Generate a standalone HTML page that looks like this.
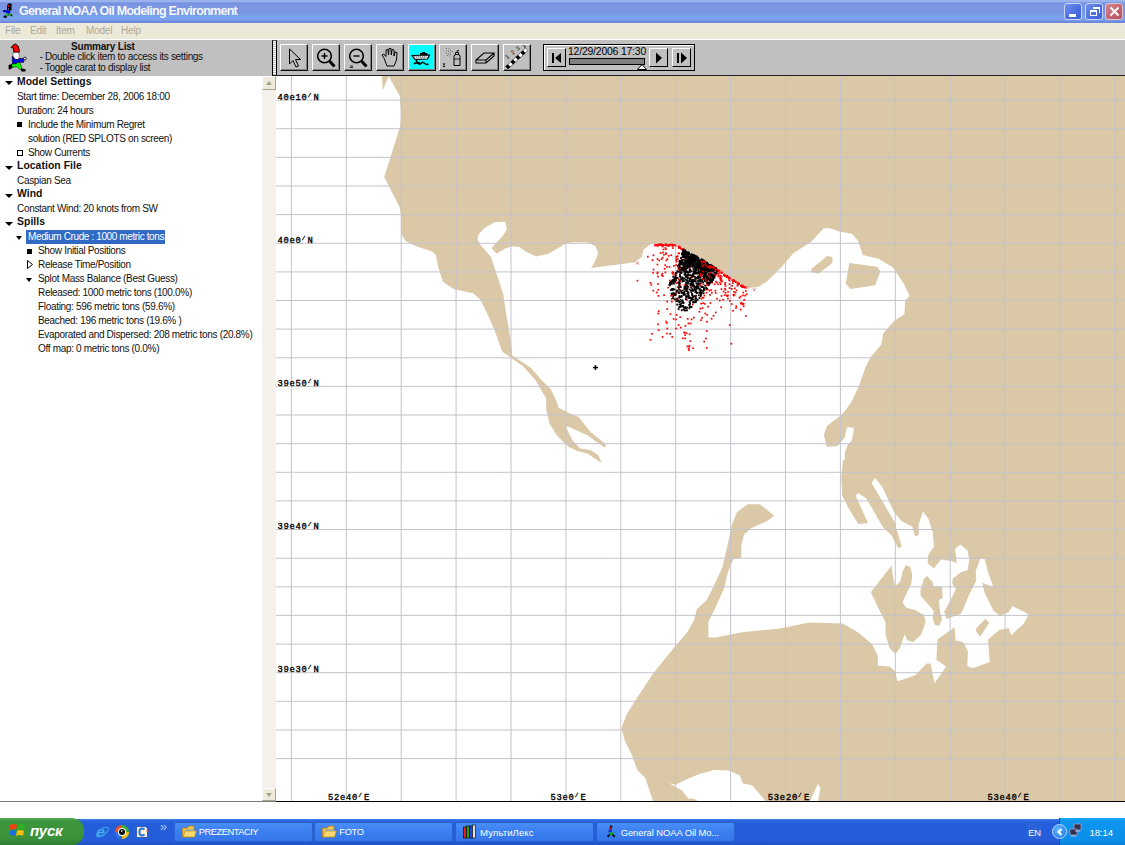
<!DOCTYPE html>
<html><head><meta charset="utf-8">
<style>
*{margin:0;padding:0;box-sizing:border-box}
html,body{width:1125px;height:845px;overflow:hidden;background:#fff;font-family:"Liberation Sans",sans-serif}
.abs{position:absolute}
#title{left:0;top:0;width:1125px;height:23px;background:linear-gradient(to bottom,#9ab2ee 0,#9ab2ee 1.5px,#7392de 3px,#7b95e2 5px,#7996e2 13px,#79a6ec 17px,#7ea0ea 20px,#6a86da 22px,#6f8ade 23px)}
#title .t{left:19px;top:4px;color:#f4f7ff;font-weight:bold;font-size:12.5px;letter-spacing:-0.72px;white-space:nowrap}
.tb{top:3px;width:18px;height:17px;border-radius:3px;border:1px solid #c8d4f4;background:linear-gradient(135deg,#6f90f0,#4a6de0 60%,#3f62d8)}
#menu{left:0;top:23px;width:1125px;height:17px;background:#ece9d8;border-bottom:1px solid #fff}
#menu span{position:absolute;top:2px;font-size:10px;color:#aca899;letter-spacing:-0.2px}
#hdr{left:0;top:40px;width:1125px;height:36px;background:#c0c0c0}
.list{font-size:10px;letter-spacing:-0.32px;color:#111;white-space:nowrap}
.li{position:absolute;white-space:nowrap}
.b{font-weight:bold;letter-spacing:0.05px}
.btn{position:absolute;top:44px;width:28px;height:27px;background:#c0c0c0;border-top:1px solid #fff;border-left:1px solid #fff;border-right:1.5px solid #111;border-bottom:1.5px solid #111;box-shadow:inset -1px -1px 0 #808080}
#task{left:0;top:818px;width:1125px;height:27px;background:linear-gradient(to bottom,#fff 0,#fff 1px,#3d80f0 1px,#2a64dc 3px,#245edb 5px,#245ddb 22px,#1f51c4 27px)}
.tbtn{position:absolute;top:822px;height:20px;border-radius:3px;background:linear-gradient(to bottom,#4a8ef7,#3a7ff0 50%,#3675ea);box-shadow:inset 0 0 0 1px #2a60d0;color:#fff;font-size:10.3px;white-space:nowrap}
.tbtn span{position:absolute;top:4px}
</style></head><body>
<svg width="1125" height="845" viewBox="0 0 1125 845" style="position:absolute;left:0;top:0">
<rect x="276" y="76" width="849" height="725" fill="#dbc8a7"/>
<polygon points="276.0,76.0 382.0,76.0 382.7,90.4 388.7,76.2 399.8,96.2 401.0,115.0 400.0,127.0 384.2,177.1 399.3,206.4 401.1,214.2 401.1,233.8 405.6,240.9 416.2,246.2 432.2,251.6 435.8,255.1 438.4,267.6 442.9,281.8 453.6,288.9 473.1,293.3 480.2,299.6 487.3,313.8 494.4,329.8 501.6,350.0 503.1,352.3 510.8,357.7 523.1,366.2 535.4,380.0 546.2,398.5 546.2,409.2 549.2,423.1 556.9,435.4 567.7,446.2 576.9,450.8 587.7,453.8 601.5,463.1 598.5,455.4 590.8,450.0 580.0,448.5 572.3,440.0 566.2,427.7 567.7,426.2 587.7,435.4 604.6,447.7 606.2,444.6 590.8,432.3 578.5,416.9 572.3,414.6 558.5,407.7 556.9,402.3 550.8,389.2 541.5,380.0 530.8,367.7 512.3,355.4 510.4,338.7 505.1,306.7 503.3,294.2 494.4,267.6 490.9,256.9 480.2,244.4 477.6,240.0 478.4,234.7 483.8,228.4 494.4,222.2 505.1,221.7 506.9,229.3 502.4,236.4 492.7,246.6 491.8,248.4 496.6,253.7 505.1,248.4 512.2,246.2 519.3,247.1 526.4,251.9 536.2,256.5 547.8,253.9 556.7,248.9 565.6,243.6 572.4,242.3 586.7,242.3 595.6,246.2 598.2,253.3 594.7,262.2 591.1,268.1 606.2,266.1 622.2,264.0 634.7,262.2 641.8,256.9 643.6,249.8 650.7,244.1 659.6,243.6 675.6,244.1 684.4,248.9 702.2,258.7 716.4,267.6 728.9,276.4 743.1,285.3 748.9,288.0 757.8,287.1 766.7,281.8 780.9,267.6 793.3,253.3 811.1,241.8 823.6,228.4 828.9,228.1 839.6,231.6 852.0,233.8 858.2,240.9 862.7,255.1 878.7,258.7 892.9,267.6 903.6,283.6 909.8,296.0 905.3,300.0 904.4,314.2 893.8,321.3 883.1,333.8 881.3,344.4 870.7,356.9 865.3,367.6 859.6,384.2 852.4,400.2 845.8,410.0 839.9,415.9 826.8,426.0 823.9,434.9 826.8,446.7 837.5,446.1 841.0,442.0 844.6,437.8 847.0,427.2 854.1,427.8 851.7,440.8 848.1,444.3 845.2,451.4 844.6,460.0 843.1,460.0 841.3,477.8 842.2,495.6 848.4,508.0 858.2,524.0 868.0,523.1 855.6,495.6 858.2,492.9 866.2,498.2 883.1,527.6 891.1,534.7 898.2,548.0 901.8,547.1 894.7,522.2 871.6,483.1 875.1,477.8 882.2,486.7 894.7,513.3 901.8,521.3 912.4,526.7 915.1,536.4 918.7,534.7 918.7,524.0 923.1,511.6 928.4,518.7 932.9,532.9 933.8,547.1 928.4,554.2 927.6,563.1 933.8,568.4 940.9,559.6 951.6,561.3 956.9,563.1 955.1,548.9 960.4,544.4 967.6,550.7 969.3,559.6 967.6,570.2 961.3,572.0 952.8,578.4 952.3,583.7 956.0,589.1 949.6,601.9 944.3,611.5 946.4,618.9 961.3,613.6 968.8,595.5 976.3,580.5 975.7,570.9 980.5,558.1 984.8,559.2 988.0,572.0 993.3,586.9 982.1,582.7 984.8,593.3 993.3,610.4 999.7,615.7 1008.3,612.5 1012.5,606.1 1016.8,608.3 1025.3,612.5 1028.5,614.7 1023.9,623.5 1011.1,635.2 1008.9,628.3 999.3,629.9 988.1,639.5 989.7,661.9 972.7,668.3 967.3,666.1 967.9,651.2 963.1,642.1 955.6,640.5 954.5,627.2 937.5,639.5 936.4,659.7 946.2,666.6 934.5,683.2 930.6,663.6 926.7,663.6 914.9,675.4 897.3,681.2 895.4,671.5 889.5,666.6 877.8,665.6 877.8,655.8 871.9,644.1 858.2,632.4 842.6,623.6 809.3,622.6 780.0,628.4 742.2,632.2 715.6,637.6 708.4,637.6 708.4,621.6 715.6,607.3 724.4,587.8 728.0,571.8 733.3,559.3 741.3,557.6 741.3,545.1 744.0,534.4 751.1,528.2 767.1,521.1 774.2,515.8 760.0,504.2 747.6,504.2 736.9,512.2 731.6,525.6 728.0,543.3 722.7,566.4 713.8,586.0 706.7,600.2 696.9,609.1 694.2,619.8 687.1,632.4 674.7,646.7 653.3,673.3 635.6,700.0 626.7,714.2 621.3,728.4 624.9,740.9 632.0,755.1 637.3,770.0 645.3,778.0 653.0,801.0 276.0,801.0" fill="#fff"/>
<polygon points="669.2,783.2 675.6,784.8 686.8,779.2 698.0,774.4 714.0,769.9 728.4,770.4 739.6,775.2 742.8,783.2 752.4,785.6 762.0,796.8 765.2,801.0 698.0,801.0 693.2,798.4 688.4,798.4 682.0,790.4" fill="#fff"/>
<polygon points="810.0,801.0 818.0,784.0 820.4,788.0 818.0,801.0" fill="#fff"/>
<polygon points="811.1,269.3 827.1,256.0 832.4,256.9 832.4,263.1 818.2,273.8 811.1,272.0" fill="#dbc8a7"/>
<polygon points="849.3,263.1 876.9,266.7 880.4,271.1 875.1,285.3 850.2,288.9 845.8,283.6" fill="#dbc8a7"/>
<polygon points="891.5,565.5 893.1,576.7 895.2,586.3 900.5,580.9 902.7,571.3 905.9,564.9 910.1,567.1 912.3,574.5 911.2,584.1 905.9,594.8 902.7,602.3 905.9,607.6 915.5,610.3 924.0,615.1 925.7,622.0 920.8,635.3 913.0,642.1 907.1,640.2 905.1,634.3 903.2,638.2 900.0,648.0 895.4,653.9 889.5,648.0 885.6,634.3 885.6,622.6 877.8,606.9 870.9,592.3" fill="#dbc8a7"/>
<polygon points="927.2,576.1 932.5,582.0 933.6,586.3 942.1,587.3 942.7,598.0 938.9,600.1 940.0,611.9 942.1,619.3 938.9,625.7 934.7,624.7 932.5,618.3 933.6,610.8 928.3,604.4 920.8,595.9 920.3,590.5 924.0,578.8" fill="#dbc8a7"/>
<polygon points="975.9,628.8 985.5,618.7 989.2,622.9 980.1,636.8 976.4,632.0" fill="#dbc8a7"/>
<g fill="#c4c4cc"><rect x="290.9" y="76" width="1" height="725"/><rect x="345.8" y="76" width="1" height="725"/><rect x="400.7" y="76" width="1" height="725"/><rect x="455.6" y="76" width="1" height="725"/><rect x="510.5" y="76" width="1" height="725"/><rect x="565.4" y="76" width="1" height="725"/><rect x="620.3" y="76" width="1" height="725"/><rect x="675.2" y="76" width="1" height="725"/><rect x="730.1" y="76" width="1" height="725"/><rect x="785.0" y="76" width="1" height="725"/><rect x="839.9" y="76" width="1" height="725"/><rect x="894.8" y="76" width="1" height="725"/><rect x="949.7" y="76" width="1" height="725"/><rect x="1004.6" y="76" width="1" height="725"/><rect x="1059.5" y="76" width="1" height="725"/><rect x="1114.4" y="76" width="1" height="725"/><rect x="276" y="99.6" width="849" height="1"/><rect x="276" y="128.2" width="849" height="1"/><rect x="276" y="156.9" width="849" height="1"/><rect x="276" y="185.5" width="849" height="1"/><rect x="276" y="214.1" width="849" height="1"/><rect x="276" y="242.8" width="849" height="1"/><rect x="276" y="271.4" width="849" height="1"/><rect x="276" y="300.0" width="849" height="1"/><rect x="276" y="328.6" width="849" height="1"/><rect x="276" y="357.3" width="849" height="1"/><rect x="276" y="385.9" width="849" height="1"/><rect x="276" y="414.5" width="849" height="1"/><rect x="276" y="443.2" width="849" height="1"/><rect x="276" y="471.8" width="849" height="1"/><rect x="276" y="500.4" width="849" height="1"/><rect x="276" y="529.0" width="849" height="1"/><rect x="276" y="557.7" width="849" height="1"/><rect x="276" y="586.3" width="849" height="1"/><rect x="276" y="614.9" width="849" height="1"/><rect x="276" y="643.6" width="849" height="1"/><rect x="276" y="672.2" width="849" height="1"/><rect x="276" y="700.8" width="849" height="1"/><rect x="276" y="729.5" width="849" height="1"/><rect x="276" y="758.1" width="849" height="1"/></g>
<g fill="#f00"><rect x="713.2" y="267.1" width="1.7" height="1.7"/><rect x="662.1" y="244.6" width="1.7" height="1.7"/><rect x="674.8" y="244.8" width="1.7" height="1.7"/><rect x="666.9" y="244.5" width="1.7" height="1.7"/><rect x="713.3" y="266.5" width="1.7" height="1.7"/><rect x="718.8" y="269.9" width="1.7" height="1.7"/><rect x="666.3" y="244.8" width="1.7" height="1.7"/><rect x="740.6" y="284.8" width="1.7" height="1.7"/><rect x="723.1" y="274.0" width="1.7" height="1.7"/><rect x="737.2" y="282.7" width="1.7" height="1.7"/><rect x="727.6" y="276.8" width="1.7" height="1.7"/><rect x="654.7" y="244.0" width="1.7" height="1.7"/><rect x="741.4" y="285.9" width="1.7" height="1.7"/><rect x="737.6" y="283.1" width="1.7" height="1.7"/><rect x="659.9" y="244.3" width="1.7" height="1.7"/><rect x="667.9" y="244.6" width="1.7" height="1.7"/><rect x="683.1" y="248.8" width="1.7" height="1.7"/><rect x="656.1" y="243.9" width="1.7" height="1.7"/><rect x="724.5" y="274.9" width="1.7" height="1.7"/><rect x="726.0" y="275.9" width="1.7" height="1.7"/><rect x="677.9" y="245.8" width="1.7" height="1.7"/><rect x="713.6" y="266.4" width="1.7" height="1.7"/><rect x="659.7" y="243.9" width="1.7" height="1.7"/><rect x="743.4" y="286.5" width="1.7" height="1.7"/><rect x="716.9" y="269.2" width="1.7" height="1.7"/><rect x="660.1" y="243.6" width="1.7" height="1.7"/><rect x="671.9" y="244.8" width="1.7" height="1.7"/><rect x="741.7" y="284.7" width="1.7" height="1.7"/><rect x="661.0" y="243.6" width="1.7" height="1.7"/><rect x="736.8" y="282.2" width="1.7" height="1.7"/><rect x="732.1" y="280.2" width="1.7" height="1.7"/><rect x="718.7" y="269.9" width="1.7" height="1.7"/><rect x="744.5" y="286.5" width="1.7" height="1.7"/><rect x="733.1" y="279.4" width="1.7" height="1.7"/><rect x="715.0" y="267.8" width="1.7" height="1.7"/><rect x="664.8" y="243.6" width="1.7" height="1.7"/><rect x="683.7" y="249.1" width="1.7" height="1.7"/><rect x="664.6" y="243.8" width="1.7" height="1.7"/><rect x="715.6" y="268.5" width="1.7" height="1.7"/><rect x="721.2" y="271.4" width="1.7" height="1.7"/><rect x="723.1" y="274.0" width="1.7" height="1.7"/><rect x="733.0" y="279.8" width="1.7" height="1.7"/><rect x="668.7" y="244.5" width="1.7" height="1.7"/><rect x="733.8" y="280.2" width="1.7" height="1.7"/><rect x="735.1" y="280.9" width="1.7" height="1.7"/><rect x="726.0" y="275.8" width="1.7" height="1.7"/><rect x="728.7" y="277.2" width="1.7" height="1.7"/><rect x="671.4" y="243.7" width="1.7" height="1.7"/><rect x="721.3" y="272.0" width="1.7" height="1.7"/><rect x="672.0" y="244.4" width="1.7" height="1.7"/><rect x="665.5" y="243.6" width="1.7" height="1.7"/><rect x="669.4" y="243.8" width="1.7" height="1.7"/><rect x="727.9" y="277.4" width="1.7" height="1.7"/><rect x="683.8" y="249.6" width="1.7" height="1.7"/><rect x="743.5" y="286.1" width="1.7" height="1.7"/><rect x="680.5" y="248.4" width="1.7" height="1.7"/><rect x="671.6" y="245.3" width="1.7" height="1.7"/><rect x="677.7" y="245.7" width="1.7" height="1.7"/><rect x="723.1" y="274.2" width="1.7" height="1.7"/><rect x="662.2" y="244.1" width="1.7" height="1.7"/><rect x="713.4" y="267.3" width="1.7" height="1.7"/><rect x="714.5" y="267.9" width="1.7" height="1.7"/><rect x="725.6" y="275.9" width="1.7" height="1.7"/><rect x="723.2" y="274.1" width="1.7" height="1.7"/><rect x="742.4" y="285.6" width="1.7" height="1.7"/><rect x="657.2" y="245.0" width="1.7" height="1.7"/><rect x="728.2" y="276.3" width="1.7" height="1.7"/><rect x="682.1" y="248.1" width="1.7" height="1.7"/><rect x="739.9" y="285.0" width="1.7" height="1.7"/><rect x="742.1" y="286.1" width="1.7" height="1.7"/><rect x="679.8" y="247.5" width="1.7" height="1.7"/><rect x="661.3" y="244.6" width="1.7" height="1.7"/><rect x="678.3" y="246.0" width="1.7" height="1.7"/><rect x="717.1" y="268.9" width="1.7" height="1.7"/><rect x="657.7" y="243.7" width="1.7" height="1.7"/><rect x="659.8" y="244.2" width="1.7" height="1.7"/><rect x="673.9" y="244.1" width="1.7" height="1.7"/><rect x="734.9" y="281.5" width="1.7" height="1.7"/><rect x="661.5" y="245.0" width="1.7" height="1.7"/><rect x="712.4" y="266.5" width="1.7" height="1.7"/><rect x="658.6" y="243.8" width="1.7" height="1.7"/><rect x="670.4" y="243.7" width="1.7" height="1.7"/><rect x="717.9" y="270.2" width="1.7" height="1.7"/><rect x="743.1" y="286.0" width="1.7" height="1.7"/><rect x="731.4" y="279.3" width="1.7" height="1.7"/><rect x="742.7" y="286.4" width="1.7" height="1.7"/><rect x="726.4" y="275.3" width="1.7" height="1.7"/><rect x="713.4" y="267.3" width="1.7" height="1.7"/><rect x="732.6" y="280.3" width="1.7" height="1.7"/><rect x="663.0" y="244.2" width="1.7" height="1.7"/><rect x="679.2" y="246.6" width="1.7" height="1.7"/><rect x="726.3" y="275.0" width="1.7" height="1.7"/><rect x="659.5" y="243.4" width="1.7" height="1.7"/><rect x="655.7" y="244.7" width="1.7" height="1.7"/><rect x="720.5" y="271.9" width="1.7" height="1.7"/><rect x="678.8" y="246.4" width="1.7" height="1.7"/><rect x="737.8" y="282.7" width="1.7" height="1.7"/><rect x="671.8" y="244.1" width="1.7" height="1.7"/><rect x="664.6" y="244.2" width="1.7" height="1.7"/><rect x="668.6" y="244.0" width="1.7" height="1.7"/><rect x="738.2" y="283.1" width="1.7" height="1.7"/><rect x="743.3" y="285.8" width="1.7" height="1.7"/><rect x="732.0" y="279.2" width="1.7" height="1.7"/><rect x="668.4" y="244.8" width="1.7" height="1.7"/><rect x="725.7" y="274.8" width="1.7" height="1.7"/><rect x="678.6" y="246.2" width="1.7" height="1.7"/><rect x="667.4" y="244.6" width="1.7" height="1.7"/><rect x="740.3" y="284.5" width="1.7" height="1.7"/><rect x="662.2" y="244.1" width="1.7" height="1.7"/><rect x="737.9" y="282.8" width="1.7" height="1.7"/><rect x="684.3" y="307.2" width="1.7" height="1.7"/><rect x="683.7" y="264.7" width="1.7" height="1.7"/><rect x="657.4" y="288.9" width="1.7" height="1.7"/><rect x="636.6" y="279.8" width="1.7" height="1.7"/><rect x="687.8" y="295.0" width="1.7" height="1.7"/><rect x="675.4" y="259.2" width="1.7" height="1.7"/><rect x="686.9" y="318.0" width="1.7" height="1.7"/><rect x="686.3" y="309.6" width="1.7" height="1.7"/><rect x="669.2" y="333.0" width="1.7" height="1.7"/><rect x="679.3" y="284.6" width="1.7" height="1.7"/><rect x="672.3" y="271.9" width="1.7" height="1.7"/><rect x="649.5" y="282.0" width="1.7" height="1.7"/><rect x="647.0" y="255.8" width="1.7" height="1.7"/><rect x="687.4" y="257.3" width="1.7" height="1.7"/><rect x="666.1" y="266.1" width="1.7" height="1.7"/><rect x="657.8" y="310.4" width="1.7" height="1.7"/><rect x="665.2" y="248.3" width="1.7" height="1.7"/><rect x="652.6" y="254.4" width="1.7" height="1.7"/><rect x="708.0" y="277.6" width="1.7" height="1.7"/><rect x="672.4" y="288.6" width="1.7" height="1.7"/><rect x="657.4" y="312.7" width="1.7" height="1.7"/><rect x="657.1" y="275.7" width="1.7" height="1.7"/><rect x="691.7" y="257.8" width="1.7" height="1.7"/><rect x="665.1" y="253.2" width="1.7" height="1.7"/><rect x="707.2" y="305.8" width="1.7" height="1.7"/><rect x="688.8" y="333.4" width="1.7" height="1.7"/><rect x="692.3" y="261.9" width="1.7" height="1.7"/><rect x="702.5" y="283.2" width="1.7" height="1.7"/><rect x="683.8" y="249.6" width="1.7" height="1.7"/><rect x="674.5" y="273.3" width="1.7" height="1.7"/><rect x="687.6" y="322.6" width="1.7" height="1.7"/><rect x="672.0" y="271.3" width="1.7" height="1.7"/><rect x="710.2" y="267.5" width="1.7" height="1.7"/><rect x="689.7" y="322.6" width="1.7" height="1.7"/><rect x="675.8" y="260.8" width="1.7" height="1.7"/><rect x="666.4" y="308.3" width="1.7" height="1.7"/><rect x="666.0" y="322.2" width="1.7" height="1.7"/><rect x="657.2" y="283.2" width="1.7" height="1.7"/><rect x="657.2" y="323.5" width="1.7" height="1.7"/><rect x="658.3" y="259.6" width="1.7" height="1.7"/><rect x="661.7" y="336.1" width="1.7" height="1.7"/><rect x="675.2" y="327.7" width="1.7" height="1.7"/><rect x="675.5" y="264.1" width="1.7" height="1.7"/><rect x="704.0" y="303.0" width="1.7" height="1.7"/><rect x="660.9" y="274.5" width="1.7" height="1.7"/><rect x="649.6" y="338.9" width="1.7" height="1.7"/><rect x="684.3" y="334.2" width="1.7" height="1.7"/><rect x="699.4" y="284.1" width="1.7" height="1.7"/><rect x="685.7" y="332.4" width="1.7" height="1.7"/><rect x="675.2" y="300.4" width="1.7" height="1.7"/><rect x="671.4" y="336.1" width="1.7" height="1.7"/><rect x="692.4" y="273.8" width="1.7" height="1.7"/><rect x="672.8" y="318.0" width="1.7" height="1.7"/><rect x="686.6" y="345.5" width="1.7" height="1.7"/><rect x="684.5" y="325.1" width="1.7" height="1.7"/><rect x="656.5" y="272.6" width="1.7" height="1.7"/><rect x="675.8" y="258.4" width="1.7" height="1.7"/><rect x="692.0" y="303.6" width="1.7" height="1.7"/><rect x="668.7" y="266.1" width="1.7" height="1.7"/><rect x="657.8" y="329.3" width="1.7" height="1.7"/><rect x="651.7" y="259.4" width="1.7" height="1.7"/><rect x="677.7" y="324.1" width="1.7" height="1.7"/><rect x="666.6" y="258.2" width="1.7" height="1.7"/><rect x="671.5" y="288.0" width="1.7" height="1.7"/><rect x="680.4" y="257.5" width="1.7" height="1.7"/><rect x="675.4" y="292.4" width="1.7" height="1.7"/><rect x="690.8" y="318.6" width="1.7" height="1.7"/><rect x="667.9" y="255.0" width="1.7" height="1.7"/><rect x="652.2" y="271.9" width="1.7" height="1.7"/><rect x="684.1" y="331.8" width="1.7" height="1.7"/><rect x="692.2" y="347.4" width="1.7" height="1.7"/><rect x="676.9" y="286.3" width="1.7" height="1.7"/><rect x="675.7" y="314.0" width="1.7" height="1.7"/><rect x="676.5" y="297.6" width="1.7" height="1.7"/><rect x="669.0" y="279.7" width="1.7" height="1.7"/><rect x="679.4" y="316.3" width="1.7" height="1.7"/><rect x="688.3" y="345.9" width="1.7" height="1.7"/><rect x="666.1" y="332.7" width="1.7" height="1.7"/><rect x="687.7" y="347.8" width="1.7" height="1.7"/><rect x="672.2" y="247.2" width="1.7" height="1.7"/><rect x="705.9" y="330.2" width="1.7" height="1.7"/><rect x="679.1" y="271.9" width="1.7" height="1.7"/><rect x="651.2" y="333.0" width="1.7" height="1.7"/><rect x="690.6" y="261.9" width="1.7" height="1.7"/><rect x="679.7" y="268.7" width="1.7" height="1.7"/><rect x="689.5" y="340.3" width="1.7" height="1.7"/><rect x="670.9" y="298.0" width="1.7" height="1.7"/><rect x="670.3" y="294.9" width="1.7" height="1.7"/><rect x="688.1" y="349.4" width="1.7" height="1.7"/><rect x="686.1" y="299.0" width="1.7" height="1.7"/><rect x="706.0" y="320.9" width="1.7" height="1.7"/><rect x="675.2" y="282.0" width="1.7" height="1.7"/><rect x="685.0" y="288.9" width="1.7" height="1.7"/><rect x="678.1" y="278.4" width="1.7" height="1.7"/><rect x="700.3" y="302.8" width="1.7" height="1.7"/><rect x="687.8" y="295.9" width="1.7" height="1.7"/><rect x="705.1" y="337.7" width="1.7" height="1.7"/><rect x="678.6" y="280.5" width="1.7" height="1.7"/><rect x="703.3" y="340.8" width="1.7" height="1.7"/><rect x="702.7" y="296.8" width="1.7" height="1.7"/><rect x="688.6" y="344.9" width="1.7" height="1.7"/><rect x="705.9" y="347.0" width="1.7" height="1.7"/><rect x="677.7" y="268.4" width="1.7" height="1.7"/><rect x="691.5" y="281.1" width="1.7" height="1.7"/><rect x="678.0" y="287.0" width="1.7" height="1.7"/><rect x="671.8" y="293.5" width="1.7" height="1.7"/><rect x="666.3" y="300.8" width="1.7" height="1.7"/><rect x="672.5" y="273.6" width="1.7" height="1.7"/><rect x="702.3" y="273.2" width="1.7" height="1.7"/><rect x="681.5" y="248.8" width="1.7" height="1.7"/><rect x="666.4" y="327.7" width="1.7" height="1.7"/><rect x="690.9" y="262.8" width="1.7" height="1.7"/><rect x="684.7" y="253.5" width="1.7" height="1.7"/><rect x="665.2" y="320.7" width="1.7" height="1.7"/><rect x="712.7" y="315.0" width="1.7" height="1.7"/><rect x="669.3" y="283.9" width="1.7" height="1.7"/><rect x="689.8" y="286.4" width="1.7" height="1.7"/><rect x="705.6" y="291.9" width="1.7" height="1.7"/><rect x="701.2" y="317.0" width="1.7" height="1.7"/><rect x="686.7" y="274.5" width="1.7" height="1.7"/><rect x="669.6" y="313.2" width="1.7" height="1.7"/><rect x="657.6" y="295.0" width="1.7" height="1.7"/><rect x="705.8" y="288.6" width="1.7" height="1.7"/><rect x="678.7" y="264.7" width="1.7" height="1.7"/><rect x="684.4" y="337.6" width="1.7" height="1.7"/><rect x="682.1" y="337.4" width="1.7" height="1.7"/><rect x="667.2" y="286.8" width="1.7" height="1.7"/><rect x="681.8" y="255.3" width="1.7" height="1.7"/><rect x="703.4" y="271.9" width="1.7" height="1.7"/><rect x="718.9" y="299.6" width="1.7" height="1.7"/><rect x="671.9" y="294.9" width="1.7" height="1.7"/><rect x="720.7" y="275.7" width="1.7" height="1.7"/><rect x="679.4" y="289.2" width="1.7" height="1.7"/><rect x="675.4" y="256.0" width="1.7" height="1.7"/><rect x="691.8" y="264.3" width="1.7" height="1.7"/><rect x="693.1" y="295.3" width="1.7" height="1.7"/><rect x="683.8" y="268.3" width="1.7" height="1.7"/><rect x="700.5" y="269.6" width="1.7" height="1.7"/><rect x="694.6" y="296.6" width="1.7" height="1.7"/><rect x="685.0" y="251.0" width="1.7" height="1.7"/><rect x="710.7" y="317.9" width="1.7" height="1.7"/><rect x="701.2" y="268.4" width="1.7" height="1.7"/><rect x="697.1" y="262.2" width="1.7" height="1.7"/><rect x="688.7" y="274.6" width="1.7" height="1.7"/><rect x="706.4" y="270.9" width="1.7" height="1.7"/><rect x="675.0" y="277.0" width="1.7" height="1.7"/><rect x="702.2" y="302.3" width="1.7" height="1.7"/><rect x="678.6" y="263.1" width="1.7" height="1.7"/><rect x="661.4" y="272.9" width="1.7" height="1.7"/><rect x="679.9" y="326.8" width="1.7" height="1.7"/><rect x="706.2" y="314.0" width="1.7" height="1.7"/><rect x="715.1" y="280.9" width="1.7" height="1.7"/><rect x="663.2" y="294.3" width="1.7" height="1.7"/><rect x="678.3" y="252.6" width="1.7" height="1.7"/><rect x="685.3" y="261.9" width="1.7" height="1.7"/><rect x="705.6" y="278.2" width="1.7" height="1.7"/><rect x="690.9" y="259.8" width="1.7" height="1.7"/><rect x="664.5" y="271.5" width="1.7" height="1.7"/><rect x="683.4" y="267.3" width="1.7" height="1.7"/><rect x="678.8" y="284.0" width="1.7" height="1.7"/><rect x="700.1" y="319.3" width="1.7" height="1.7"/><rect x="685.2" y="288.6" width="1.7" height="1.7"/><rect x="695.0" y="271.9" width="1.7" height="1.7"/><rect x="675.0" y="298.5" width="1.7" height="1.7"/><rect x="688.5" y="266.5" width="1.7" height="1.7"/><rect x="684.7" y="286.4" width="1.7" height="1.7"/><rect x="673.4" y="278.5" width="1.7" height="1.7"/><rect x="687.0" y="265.0" width="1.7" height="1.7"/><rect x="650.5" y="283.9" width="1.7" height="1.7"/><rect x="659.7" y="252.2" width="1.7" height="1.7"/><rect x="682.6" y="267.5" width="1.7" height="1.7"/><rect x="679.3" y="266.9" width="1.7" height="1.7"/><rect x="694.4" y="259.0" width="1.7" height="1.7"/><rect x="700.6" y="297.8" width="1.7" height="1.7"/><rect x="707.2" y="282.2" width="1.7" height="1.7"/><rect x="691.6" y="261.3" width="1.7" height="1.7"/><rect x="677.5" y="267.0" width="1.7" height="1.7"/><rect x="698.6" y="310.9" width="1.7" height="1.7"/><rect x="676.7" y="255.4" width="1.7" height="1.7"/><rect x="656.6" y="263.7" width="1.7" height="1.7"/><rect x="653.9" y="244.6" width="1.7" height="1.7"/><rect x="700.2" y="261.2" width="1.7" height="1.7"/><rect x="673.1" y="265.0" width="1.7" height="1.7"/><rect x="652.7" y="268.7" width="1.7" height="1.7"/><rect x="665.0" y="252.3" width="1.7" height="1.7"/><rect x="678.0" y="246.5" width="1.7" height="1.7"/><rect x="698.1" y="263.4" width="1.7" height="1.7"/><rect x="705.8" y="284.6" width="1.7" height="1.7"/><rect x="670.4" y="254.3" width="1.7" height="1.7"/><rect x="691.4" y="276.4" width="1.7" height="1.7"/><rect x="662.0" y="275.1" width="1.7" height="1.7"/><rect x="661.9" y="245.7" width="1.7" height="1.7"/><rect x="692.9" y="316.8" width="1.7" height="1.7"/><rect x="683.7" y="284.2" width="1.7" height="1.7"/><rect x="675.3" y="274.4" width="1.7" height="1.7"/><rect x="730.6" y="342.9" width="1.7" height="1.7"/><rect x="660.8" y="258.3" width="1.7" height="1.7"/><rect x="676.5" y="255.7" width="1.7" height="1.7"/><rect x="656.8" y="271.6" width="1.7" height="1.7"/><rect x="683.2" y="331.6" width="1.7" height="1.7"/><rect x="724.6" y="289.0" width="1.7" height="1.7"/><rect x="690.0" y="276.6" width="1.7" height="1.7"/><rect x="661.7" y="256.8" width="1.7" height="1.7"/><rect x="682.3" y="253.8" width="1.7" height="1.7"/><rect x="678.1" y="247.2" width="1.7" height="1.7"/><rect x="713.4" y="274.9" width="1.7" height="1.7"/><rect x="670.5" y="282.0" width="1.7" height="1.7"/><rect x="683.4" y="270.7" width="1.7" height="1.7"/><rect x="710.4" y="289.2" width="1.7" height="1.7"/><rect x="662.6" y="248.6" width="1.7" height="1.7"/><rect x="691.3" y="265.4" width="1.7" height="1.7"/><rect x="693.7" y="261.2" width="1.7" height="1.7"/><rect x="676.9" y="258.3" width="1.7" height="1.7"/><rect x="677.7" y="252.4" width="1.7" height="1.7"/><rect x="671.4" y="272.2" width="1.7" height="1.7"/><rect x="662.1" y="251.6" width="1.7" height="1.7"/><rect x="664.5" y="247.1" width="1.7" height="1.7"/><rect x="678.9" y="285.3" width="1.7" height="1.7"/><rect x="688.9" y="268.0" width="1.7" height="1.7"/><rect x="696.7" y="257.1" width="1.7" height="1.7"/><rect x="693.8" y="254.8" width="1.7" height="1.7"/><rect x="699.6" y="289.9" width="1.7" height="1.7"/><rect x="684.7" y="252.9" width="1.7" height="1.7"/><rect x="684.8" y="268.4" width="1.7" height="1.7"/><rect x="695.5" y="285.5" width="1.7" height="1.7"/><rect x="678.3" y="269.5" width="1.7" height="1.7"/><rect x="678.7" y="281.7" width="1.7" height="1.7"/><rect x="679.3" y="280.4" width="1.7" height="1.7"/><rect x="699.4" y="307.8" width="1.7" height="1.7"/><rect x="676.3" y="272.1" width="1.7" height="1.7"/><rect x="664.4" y="264.3" width="1.7" height="1.7"/><rect x="675.2" y="318.6" width="1.7" height="1.7"/><rect x="655.9" y="291.6" width="1.7" height="1.7"/><rect x="684.9" y="268.5" width="1.7" height="1.7"/><rect x="652.4" y="289.8" width="1.7" height="1.7"/><rect x="697.4" y="269.0" width="1.7" height="1.7"/><rect x="696.7" y="272.9" width="1.7" height="1.7"/><rect x="686.2" y="290.5" width="1.7" height="1.7"/><rect x="681.6" y="266.8" width="1.7" height="1.7"/><rect x="680.9" y="252.5" width="1.7" height="1.7"/><rect x="688.8" y="263.8" width="1.7" height="1.7"/><rect x="684.3" y="257.6" width="1.7" height="1.7"/><rect x="709.5" y="302.2" width="1.7" height="1.7"/><rect x="671.0" y="300.7" width="1.7" height="1.7"/><rect x="689.0" y="265.3" width="1.7" height="1.7"/><rect x="656.6" y="258.2" width="1.7" height="1.7"/><rect x="711.2" y="281.9" width="1.7" height="1.7"/><rect x="686.4" y="275.5" width="1.7" height="1.7"/><rect x="663.8" y="268.0" width="1.7" height="1.7"/><rect x="665.5" y="259.5" width="1.7" height="1.7"/><rect x="697.4" y="264.5" width="1.7" height="1.7"/><rect x="695.8" y="291.8" width="1.7" height="1.7"/><rect x="663.1" y="253.9" width="1.7" height="1.7"/><rect x="692.5" y="257.0" width="1.7" height="1.7"/></g>
<g fill="#000"><rect x="690.8" y="262.4" width="1.8" height="1.8"/><rect x="672.0" y="288.3" width="1.8" height="1.8"/><rect x="702.7" y="259.4" width="1.8" height="1.8"/><rect x="684.7" y="256.7" width="1.8" height="1.8"/><rect x="702.7" y="268.8" width="1.8" height="1.8"/><rect x="710.8" y="278.8" width="1.8" height="1.8"/><rect x="691.5" y="294.4" width="1.8" height="1.8"/><rect x="685.0" y="285.6" width="1.8" height="1.8"/><rect x="681.9" y="267.3" width="1.8" height="1.8"/><rect x="687.2" y="261.7" width="1.8" height="1.8"/><rect x="711.2" y="277.0" width="1.8" height="1.8"/><rect x="691.4" y="265.5" width="1.8" height="1.8"/><rect x="699.8" y="280.1" width="1.8" height="1.8"/><rect x="701.1" y="285.7" width="1.8" height="1.8"/><rect x="695.3" y="262.6" width="1.8" height="1.8"/><rect x="709.6" y="269.5" width="1.8" height="1.8"/><rect x="694.3" y="256.7" width="1.8" height="1.8"/><rect x="677.7" y="308.3" width="1.8" height="1.8"/><rect x="687.2" y="264.6" width="1.8" height="1.8"/><rect x="685.2" y="255.0" width="1.8" height="1.8"/><rect x="684.1" y="307.6" width="1.8" height="1.8"/><rect x="685.5" y="275.3" width="1.8" height="1.8"/><rect x="692.4" y="274.2" width="1.8" height="1.8"/><rect x="680.4" y="278.5" width="1.8" height="1.8"/><rect x="699.5" y="276.1" width="1.8" height="1.8"/><rect x="678.1" y="263.8" width="1.8" height="1.8"/><rect x="698.5" y="297.1" width="1.8" height="1.8"/><rect x="707.4" y="266.1" width="1.8" height="1.8"/><rect x="683.0" y="255.8" width="1.8" height="1.8"/><rect x="680.8" y="309.4" width="1.8" height="1.8"/><rect x="698.9" y="274.1" width="1.8" height="1.8"/><rect x="699.5" y="263.5" width="1.8" height="1.8"/><rect x="685.3" y="296.7" width="1.8" height="1.8"/><rect x="699.7" y="269.9" width="1.8" height="1.8"/><rect x="686.6" y="251.9" width="1.8" height="1.8"/><rect x="699.4" y="275.1" width="1.8" height="1.8"/><rect x="686.1" y="306.7" width="1.8" height="1.8"/><rect x="678.6" y="264.5" width="1.8" height="1.8"/><rect x="680.5" y="261.6" width="1.8" height="1.8"/><rect x="681.9" y="277.9" width="1.8" height="1.8"/><rect x="708.5" y="273.8" width="1.8" height="1.8"/><rect x="693.7" y="269.6" width="1.8" height="1.8"/><rect x="687.3" y="266.5" width="1.8" height="1.8"/><rect x="682.0" y="252.7" width="1.8" height="1.8"/><rect x="681.9" y="251.2" width="1.8" height="1.8"/><rect x="710.8" y="267.0" width="1.8" height="1.8"/><rect x="697.0" y="262.3" width="1.8" height="1.8"/><rect x="685.4" y="252.0" width="1.8" height="1.8"/><rect x="704.1" y="263.8" width="1.8" height="1.8"/><rect x="685.9" y="254.2" width="1.8" height="1.8"/><rect x="702.6" y="265.1" width="1.8" height="1.8"/><rect x="707.6" y="284.1" width="1.8" height="1.8"/><rect x="699.0" y="261.3" width="1.8" height="1.8"/><rect x="684.8" y="268.2" width="1.8" height="1.8"/><rect x="694.3" y="257.1" width="1.8" height="1.8"/><rect x="686.5" y="260.2" width="1.8" height="1.8"/><rect x="699.3" y="273.2" width="1.8" height="1.8"/><rect x="711.5" y="279.4" width="1.8" height="1.8"/><rect x="693.3" y="286.2" width="1.8" height="1.8"/><rect x="686.3" y="267.3" width="1.8" height="1.8"/><rect x="706.2" y="287.9" width="1.8" height="1.8"/><rect x="695.1" y="272.6" width="1.8" height="1.8"/><rect x="686.3" y="257.6" width="1.8" height="1.8"/><rect x="699.1" y="272.2" width="1.8" height="1.8"/><rect x="685.4" y="307.2" width="1.8" height="1.8"/><rect x="695.1" y="271.4" width="1.8" height="1.8"/><rect x="681.0" y="253.3" width="1.8" height="1.8"/><rect x="685.9" y="265.4" width="1.8" height="1.8"/><rect x="696.9" y="265.8" width="1.8" height="1.8"/><rect x="677.7" y="291.7" width="1.8" height="1.8"/><rect x="707.8" y="270.4" width="1.8" height="1.8"/><rect x="689.3" y="278.1" width="1.8" height="1.8"/><rect x="700.9" y="289.6" width="1.8" height="1.8"/><rect x="688.1" y="264.1" width="1.8" height="1.8"/><rect x="680.4" y="291.8" width="1.8" height="1.8"/><rect x="673.7" y="277.1" width="1.8" height="1.8"/><rect x="674.6" y="275.1" width="1.8" height="1.8"/><rect x="696.5" y="263.5" width="1.8" height="1.8"/><rect x="691.5" y="294.5" width="1.8" height="1.8"/><rect x="708.1" y="274.4" width="1.8" height="1.8"/><rect x="706.1" y="282.1" width="1.8" height="1.8"/><rect x="692.3" y="284.7" width="1.8" height="1.8"/><rect x="706.3" y="263.4" width="1.8" height="1.8"/><rect x="698.9" y="287.9" width="1.8" height="1.8"/><rect x="678.8" y="266.0" width="1.8" height="1.8"/><rect x="690.6" y="256.0" width="1.8" height="1.8"/><rect x="684.2" y="250.6" width="1.8" height="1.8"/><rect x="699.5" y="290.6" width="1.8" height="1.8"/><rect x="708.0" y="268.6" width="1.8" height="1.8"/><rect x="679.0" y="273.7" width="1.8" height="1.8"/><rect x="687.8" y="260.9" width="1.8" height="1.8"/><rect x="696.3" y="265.4" width="1.8" height="1.8"/><rect x="670.6" y="282.7" width="1.8" height="1.8"/><rect x="689.0" y="264.2" width="1.8" height="1.8"/><rect x="696.8" y="280.1" width="1.8" height="1.8"/><rect x="706.5" y="263.0" width="1.8" height="1.8"/><rect x="673.4" y="294.0" width="1.8" height="1.8"/><rect x="697.2" y="262.7" width="1.8" height="1.8"/><rect x="683.1" y="306.5" width="1.8" height="1.8"/><rect x="673.2" y="279.7" width="1.8" height="1.8"/><rect x="694.6" y="278.6" width="1.8" height="1.8"/><rect x="686.0" y="290.2" width="1.8" height="1.8"/><rect x="692.8" y="275.5" width="1.8" height="1.8"/><rect x="706.0" y="271.2" width="1.8" height="1.8"/><rect x="691.3" y="281.6" width="1.8" height="1.8"/><rect x="683.5" y="252.1" width="1.8" height="1.8"/><rect x="689.4" y="258.5" width="1.8" height="1.8"/><rect x="684.9" y="251.7" width="1.8" height="1.8"/><rect x="684.8" y="255.2" width="1.8" height="1.8"/><rect x="688.3" y="252.4" width="1.8" height="1.8"/><rect x="694.7" y="257.0" width="1.8" height="1.8"/><rect x="689.2" y="302.7" width="1.8" height="1.8"/><rect x="680.9" y="302.3" width="1.8" height="1.8"/><rect x="694.7" y="260.5" width="1.8" height="1.8"/><rect x="705.7" y="273.6" width="1.8" height="1.8"/><rect x="681.7" y="292.5" width="1.8" height="1.8"/><rect x="702.5" y="262.1" width="1.8" height="1.8"/><rect x="713.2" y="268.1" width="1.8" height="1.8"/><rect x="689.9" y="306.1" width="1.8" height="1.8"/><rect x="677.1" y="265.1" width="1.8" height="1.8"/><rect x="711.0" y="280.3" width="1.8" height="1.8"/><rect x="699.2" y="273.5" width="1.8" height="1.8"/><rect x="699.8" y="265.0" width="1.8" height="1.8"/><rect x="705.6" y="277.1" width="1.8" height="1.8"/><rect x="708.5" y="266.5" width="1.8" height="1.8"/><rect x="692.6" y="264.2" width="1.8" height="1.8"/><rect x="676.7" y="277.0" width="1.8" height="1.8"/><rect x="685.9" y="285.2" width="1.8" height="1.8"/><rect x="690.2" y="253.5" width="1.8" height="1.8"/><rect x="697.9" y="267.7" width="1.8" height="1.8"/><rect x="709.2" y="265.8" width="1.8" height="1.8"/><rect x="681.3" y="261.1" width="1.8" height="1.8"/><rect x="702.0" y="286.0" width="1.8" height="1.8"/><rect x="700.0" y="293.5" width="1.8" height="1.8"/><rect x="711.9" y="266.2" width="1.8" height="1.8"/><rect x="689.5" y="284.3" width="1.8" height="1.8"/><rect x="703.7" y="288.8" width="1.8" height="1.8"/><rect x="689.3" y="263.1" width="1.8" height="1.8"/><rect x="691.8" y="255.6" width="1.8" height="1.8"/><rect x="704.2" y="261.2" width="1.8" height="1.8"/><rect x="682.8" y="263.2" width="1.8" height="1.8"/><rect x="684.3" y="262.6" width="1.8" height="1.8"/><rect x="700.0" y="278.6" width="1.8" height="1.8"/><rect x="694.0" y="263.9" width="1.8" height="1.8"/><rect x="681.6" y="299.5" width="1.8" height="1.8"/><rect x="688.2" y="252.4" width="1.8" height="1.8"/><rect x="693.8" y="270.8" width="1.8" height="1.8"/><rect x="702.6" y="268.7" width="1.8" height="1.8"/><rect x="682.0" y="279.6" width="1.8" height="1.8"/><rect x="680.7" y="295.0" width="1.8" height="1.8"/><rect x="683.9" y="269.3" width="1.8" height="1.8"/><rect x="688.5" y="258.7" width="1.8" height="1.8"/><rect x="684.0" y="274.0" width="1.8" height="1.8"/><rect x="708.6" y="279.6" width="1.8" height="1.8"/><rect x="687.9" y="256.1" width="1.8" height="1.8"/><rect x="703.3" y="268.1" width="1.8" height="1.8"/><rect x="702.4" y="270.2" width="1.8" height="1.8"/><rect x="711.5" y="265.2" width="1.8" height="1.8"/><rect x="706.1" y="267.7" width="1.8" height="1.8"/><rect x="701.5" y="263.4" width="1.8" height="1.8"/><rect x="697.6" y="285.4" width="1.8" height="1.8"/><rect x="686.2" y="254.3" width="1.8" height="1.8"/><rect x="697.2" y="266.3" width="1.8" height="1.8"/><rect x="699.9" y="273.7" width="1.8" height="1.8"/><rect x="703.0" y="272.2" width="1.8" height="1.8"/><rect x="710.6" y="268.0" width="1.8" height="1.8"/><rect x="688.4" y="307.4" width="1.8" height="1.8"/><rect x="686.3" y="253.8" width="1.8" height="1.8"/><rect x="707.1" y="269.3" width="1.8" height="1.8"/><rect x="697.9" y="260.5" width="1.8" height="1.8"/><rect x="678.8" y="279.6" width="1.8" height="1.8"/><rect x="685.5" y="253.1" width="1.8" height="1.8"/><rect x="704.6" y="278.0" width="1.8" height="1.8"/><rect x="691.1" y="293.0" width="1.8" height="1.8"/><rect x="698.0" y="259.4" width="1.8" height="1.8"/><rect x="679.0" y="269.1" width="1.8" height="1.8"/><rect x="688.7" y="256.8" width="1.8" height="1.8"/><rect x="693.9" y="265.5" width="1.8" height="1.8"/><rect x="709.1" y="277.3" width="1.8" height="1.8"/><rect x="672.3" y="297.2" width="1.8" height="1.8"/><rect x="673.6" y="288.5" width="1.8" height="1.8"/><rect x="705.7" y="263.8" width="1.8" height="1.8"/><rect x="695.8" y="257.5" width="1.8" height="1.8"/><rect x="692.4" y="258.9" width="1.8" height="1.8"/><rect x="695.6" y="266.0" width="1.8" height="1.8"/><rect x="702.1" y="262.1" width="1.8" height="1.8"/><rect x="702.9" y="263.3" width="1.8" height="1.8"/><rect x="689.8" y="261.8" width="1.8" height="1.8"/><rect x="688.5" y="277.5" width="1.8" height="1.8"/><rect x="705.5" y="275.2" width="1.8" height="1.8"/><rect x="686.6" y="277.7" width="1.8" height="1.8"/><rect x="709.5" y="272.5" width="1.8" height="1.8"/><rect x="703.8" y="263.7" width="1.8" height="1.8"/><rect x="711.1" y="265.9" width="1.8" height="1.8"/><rect x="686.8" y="253.5" width="1.8" height="1.8"/><rect x="707.0" y="269.1" width="1.8" height="1.8"/><rect x="693.3" y="270.3" width="1.8" height="1.8"/><rect x="706.9" y="282.4" width="1.8" height="1.8"/><rect x="675.4" y="279.4" width="1.8" height="1.8"/><rect x="684.3" y="287.1" width="1.8" height="1.8"/><rect x="680.8" y="295.7" width="1.8" height="1.8"/><rect x="695.3" y="269.3" width="1.8" height="1.8"/><rect x="688.9" y="261.7" width="1.8" height="1.8"/><rect x="683.0" y="253.8" width="1.8" height="1.8"/><rect x="682.1" y="253.4" width="1.8" height="1.8"/><rect x="713.4" y="269.2" width="1.8" height="1.8"/><rect x="693.0" y="258.6" width="1.8" height="1.8"/><rect x="679.5" y="260.0" width="1.8" height="1.8"/><rect x="693.2" y="270.9" width="1.8" height="1.8"/><rect x="703.9" y="280.3" width="1.8" height="1.8"/><rect x="700.5" y="258.8" width="1.8" height="1.8"/><rect x="698.0" y="294.3" width="1.8" height="1.8"/><rect x="713.2" y="268.3" width="1.8" height="1.8"/><rect x="691.0" y="282.3" width="1.8" height="1.8"/><rect x="697.5" y="277.5" width="1.8" height="1.8"/><rect x="689.1" y="269.0" width="1.8" height="1.8"/><rect x="688.5" y="258.1" width="1.8" height="1.8"/><rect x="711.6" y="275.1" width="1.8" height="1.8"/><rect x="680.8" y="263.6" width="1.8" height="1.8"/><rect x="683.1" y="255.8" width="1.8" height="1.8"/><rect x="679.1" y="263.6" width="1.8" height="1.8"/><rect x="704.2" y="284.7" width="1.8" height="1.8"/><rect x="690.7" y="256.8" width="1.8" height="1.8"/><rect x="687.3" y="254.2" width="1.8" height="1.8"/><rect x="683.5" y="270.7" width="1.8" height="1.8"/><rect x="692.1" y="254.4" width="1.8" height="1.8"/><rect x="694.5" y="255.0" width="1.8" height="1.8"/><rect x="706.3" y="279.8" width="1.8" height="1.8"/><rect x="692.1" y="275.2" width="1.8" height="1.8"/><rect x="683.5" y="288.1" width="1.8" height="1.8"/><rect x="694.9" y="261.1" width="1.8" height="1.8"/><rect x="695.2" y="268.5" width="1.8" height="1.8"/><rect x="709.9" y="265.5" width="1.8" height="1.8"/><rect x="699.5" y="260.0" width="1.8" height="1.8"/><rect x="708.5" y="274.0" width="1.8" height="1.8"/><rect x="678.6" y="295.2" width="1.8" height="1.8"/><rect x="690.1" y="262.6" width="1.8" height="1.8"/><rect x="700.7" y="267.2" width="1.8" height="1.8"/><rect x="696.1" y="258.3" width="1.8" height="1.8"/><rect x="686.9" y="295.7" width="1.8" height="1.8"/><rect x="683.6" y="261.9" width="1.8" height="1.8"/><rect x="713.3" y="266.9" width="1.8" height="1.8"/><rect x="690.8" y="297.2" width="1.8" height="1.8"/><rect x="709.1" y="281.6" width="1.8" height="1.8"/><rect x="671.6" y="288.0" width="1.8" height="1.8"/><rect x="695.6" y="282.8" width="1.8" height="1.8"/><rect x="675.1" y="277.8" width="1.8" height="1.8"/><rect x="691.6" y="288.2" width="1.8" height="1.8"/><rect x="703.9" y="261.7" width="1.8" height="1.8"/><rect x="700.1" y="265.7" width="1.8" height="1.8"/><rect x="690.3" y="280.7" width="1.8" height="1.8"/><rect x="697.2" y="287.3" width="1.8" height="1.8"/><rect x="684.1" y="266.1" width="1.8" height="1.8"/><rect x="687.7" y="294.6" width="1.8" height="1.8"/><rect x="701.7" y="278.4" width="1.8" height="1.8"/><rect x="693.0" y="280.0" width="1.8" height="1.8"/><rect x="688.1" y="255.9" width="1.8" height="1.8"/><rect x="703.4" y="274.1" width="1.8" height="1.8"/><rect x="694.7" y="263.8" width="1.8" height="1.8"/><rect x="703.1" y="288.7" width="1.8" height="1.8"/><rect x="684.7" y="261.9" width="1.8" height="1.8"/><rect x="682.5" y="254.6" width="1.8" height="1.8"/><rect x="704.7" y="271.6" width="1.8" height="1.8"/><rect x="696.6" y="286.6" width="1.8" height="1.8"/><rect x="714.9" y="273.0" width="1.8" height="1.8"/><rect x="685.4" y="289.8" width="1.8" height="1.8"/><rect x="702.5" y="290.1" width="1.8" height="1.8"/><rect x="687.7" y="271.9" width="1.8" height="1.8"/><rect x="700.9" y="269.9" width="1.8" height="1.8"/><rect x="687.8" y="253.2" width="1.8" height="1.8"/><rect x="685.0" y="281.7" width="1.8" height="1.8"/><rect x="704.1" y="261.3" width="1.8" height="1.8"/><rect x="686.3" y="287.6" width="1.8" height="1.8"/><rect x="697.5" y="282.5" width="1.8" height="1.8"/><rect x="677.5" y="299.8" width="1.8" height="1.8"/><rect x="701.9" y="265.3" width="1.8" height="1.8"/><rect x="691.1" y="253.5" width="1.8" height="1.8"/><rect x="699.7" y="295.2" width="1.8" height="1.8"/><rect x="694.9" y="258.8" width="1.8" height="1.8"/><rect x="690.9" y="281.3" width="1.8" height="1.8"/><rect x="708.6" y="269.3" width="1.8" height="1.8"/><rect x="695.7" y="299.5" width="1.8" height="1.8"/><rect x="677.2" y="299.6" width="1.8" height="1.8"/><rect x="696.5" y="282.5" width="1.8" height="1.8"/><rect x="696.8" y="291.8" width="1.8" height="1.8"/><rect x="685.3" y="281.6" width="1.8" height="1.8"/><rect x="683.8" y="287.8" width="1.8" height="1.8"/><rect x="699.7" y="271.4" width="1.8" height="1.8"/><rect x="698.5" y="288.8" width="1.8" height="1.8"/><rect x="703.5" y="276.3" width="1.8" height="1.8"/><rect x="689.2" y="256.2" width="1.8" height="1.8"/><rect x="706.6" y="262.6" width="1.8" height="1.8"/><rect x="699.6" y="263.2" width="1.8" height="1.8"/><rect x="711.0" y="267.1" width="1.8" height="1.8"/><rect x="690.2" y="283.0" width="1.8" height="1.8"/><rect x="679.6" y="298.7" width="1.8" height="1.8"/><rect x="689.2" y="277.8" width="1.8" height="1.8"/><rect x="681.7" y="291.8" width="1.8" height="1.8"/><rect x="703.4" y="263.8" width="1.8" height="1.8"/><rect x="692.6" y="268.1" width="1.8" height="1.8"/><rect x="689.4" y="268.8" width="1.8" height="1.8"/><rect x="684.2" y="293.6" width="1.8" height="1.8"/><rect x="712.6" y="275.7" width="1.8" height="1.8"/><rect x="692.4" y="298.6" width="1.8" height="1.8"/><rect x="688.3" y="297.3" width="1.8" height="1.8"/><rect x="701.5" y="259.8" width="1.8" height="1.8"/><rect x="689.7" y="261.3" width="1.8" height="1.8"/><rect x="706.3" y="278.8" width="1.8" height="1.8"/><rect x="704.2" y="263.8" width="1.8" height="1.8"/><rect x="706.3" y="264.6" width="1.8" height="1.8"/><rect x="672.4" y="281.0" width="1.8" height="1.8"/><rect x="706.8" y="276.7" width="1.8" height="1.8"/><rect x="685.7" y="256.8" width="1.8" height="1.8"/><rect x="680.4" y="266.8" width="1.8" height="1.8"/><rect x="703.1" y="271.5" width="1.8" height="1.8"/><rect x="683.5" y="286.2" width="1.8" height="1.8"/><rect x="685.5" y="262.2" width="1.8" height="1.8"/><rect x="710.8" y="279.5" width="1.8" height="1.8"/><rect x="699.1" y="271.6" width="1.8" height="1.8"/><rect x="701.6" y="281.1" width="1.8" height="1.8"/><rect x="709.0" y="279.4" width="1.8" height="1.8"/><rect x="693.0" y="256.8" width="1.8" height="1.8"/><rect x="687.0" y="282.1" width="1.8" height="1.8"/><rect x="692.4" y="278.9" width="1.8" height="1.8"/><rect x="705.7" y="280.8" width="1.8" height="1.8"/><rect x="702.7" y="292.4" width="1.8" height="1.8"/><rect x="689.5" y="270.9" width="1.8" height="1.8"/><rect x="704.6" y="272.9" width="1.8" height="1.8"/><rect x="698.6" y="267.0" width="1.8" height="1.8"/><rect x="682.9" y="265.0" width="1.8" height="1.8"/><rect x="700.2" y="269.0" width="1.8" height="1.8"/><rect x="697.6" y="258.2" width="1.8" height="1.8"/><rect x="683.3" y="292.0" width="1.8" height="1.8"/><rect x="695.6" y="287.0" width="1.8" height="1.8"/><rect x="711.7" y="273.7" width="1.8" height="1.8"/><rect x="697.5" y="263.6" width="1.8" height="1.8"/><rect x="676.1" y="300.3" width="1.8" height="1.8"/><rect x="683.0" y="258.9" width="1.8" height="1.8"/><rect x="691.0" y="274.9" width="1.8" height="1.8"/><rect x="701.6" y="262.2" width="1.8" height="1.8"/><rect x="706.2" y="262.2" width="1.8" height="1.8"/><rect x="681.1" y="263.3" width="1.8" height="1.8"/><rect x="685.4" y="283.3" width="1.8" height="1.8"/><rect x="703.3" y="270.3" width="1.8" height="1.8"/><rect x="678.4" y="267.4" width="1.8" height="1.8"/><rect x="697.5" y="257.2" width="1.8" height="1.8"/><rect x="711.9" y="277.8" width="1.8" height="1.8"/><rect x="686.3" y="271.3" width="1.8" height="1.8"/><rect x="697.9" y="283.3" width="1.8" height="1.8"/><rect x="687.9" y="259.5" width="1.8" height="1.8"/><rect x="673.2" y="278.6" width="1.8" height="1.8"/><rect x="682.1" y="301.1" width="1.8" height="1.8"/><rect x="690.2" y="289.7" width="1.8" height="1.8"/><rect x="680.1" y="262.3" width="1.8" height="1.8"/><rect x="699.4" y="267.2" width="1.8" height="1.8"/><rect x="702.2" y="269.9" width="1.8" height="1.8"/><rect x="694.9" y="280.8" width="1.8" height="1.8"/><rect x="683.0" y="294.0" width="1.8" height="1.8"/><rect x="692.1" y="261.0" width="1.8" height="1.8"/><rect x="678.2" y="288.7" width="1.8" height="1.8"/><rect x="686.5" y="265.1" width="1.8" height="1.8"/><rect x="709.0" y="273.4" width="1.8" height="1.8"/><rect x="703.4" y="260.1" width="1.8" height="1.8"/><rect x="705.6" y="279.8" width="1.8" height="1.8"/><rect x="686.8" y="253.1" width="1.8" height="1.8"/><rect x="671.6" y="289.1" width="1.8" height="1.8"/><rect x="684.6" y="271.5" width="1.8" height="1.8"/><rect x="702.6" y="268.6" width="1.8" height="1.8"/><rect x="701.4" y="279.8" width="1.8" height="1.8"/><rect x="689.2" y="257.1" width="1.8" height="1.8"/><rect x="705.1" y="267.8" width="1.8" height="1.8"/><rect x="689.2" y="274.2" width="1.8" height="1.8"/><rect x="684.8" y="252.8" width="1.8" height="1.8"/><rect x="686.1" y="254.1" width="1.8" height="1.8"/><rect x="681.8" y="269.1" width="1.8" height="1.8"/><rect x="684.5" y="259.9" width="1.8" height="1.8"/><rect x="690.1" y="262.9" width="1.8" height="1.8"/><rect x="691.1" y="254.2" width="1.8" height="1.8"/><rect x="703.1" y="287.5" width="1.8" height="1.8"/><rect x="691.4" y="279.0" width="1.8" height="1.8"/><rect x="699.2" y="278.6" width="1.8" height="1.8"/><rect x="690.4" y="291.2" width="1.8" height="1.8"/><rect x="689.4" y="262.2" width="1.8" height="1.8"/><rect x="696.3" y="272.3" width="1.8" height="1.8"/><rect x="699.0" y="264.0" width="1.8" height="1.8"/><rect x="691.2" y="254.1" width="1.8" height="1.8"/><rect x="703.3" y="267.4" width="1.8" height="1.8"/><rect x="695.0" y="264.1" width="1.8" height="1.8"/><rect x="709.8" y="276.2" width="1.8" height="1.8"/><rect x="706.6" y="268.8" width="1.8" height="1.8"/><rect x="679.7" y="303.3" width="1.8" height="1.8"/><rect x="699.4" y="292.1" width="1.8" height="1.8"/><rect x="711.1" y="264.9" width="1.8" height="1.8"/><rect x="698.6" y="261.4" width="1.8" height="1.8"/><rect x="707.2" y="268.1" width="1.8" height="1.8"/><rect x="685.4" y="274.3" width="1.8" height="1.8"/><rect x="690.8" y="298.0" width="1.8" height="1.8"/><rect x="700.2" y="289.3" width="1.8" height="1.8"/><rect x="688.4" y="257.0" width="1.8" height="1.8"/><rect x="697.8" y="270.8" width="1.8" height="1.8"/><rect x="706.7" y="267.1" width="1.8" height="1.8"/><rect x="686.0" y="260.5" width="1.8" height="1.8"/><rect x="683.3" y="252.1" width="1.8" height="1.8"/><rect x="713.6" y="271.7" width="1.8" height="1.8"/><rect x="679.2" y="275.2" width="1.8" height="1.8"/><rect x="669.1" y="281.9" width="1.8" height="1.8"/><rect x="682.0" y="252.9" width="1.8" height="1.8"/><rect x="715.5" y="271.9" width="1.8" height="1.8"/><rect x="685.5" y="285.2" width="1.8" height="1.8"/><rect x="683.0" y="254.9" width="1.8" height="1.8"/><rect x="693.1" y="262.0" width="1.8" height="1.8"/><rect x="682.6" y="251.7" width="1.8" height="1.8"/><rect x="686.2" y="263.7" width="1.8" height="1.8"/><rect x="693.2" y="280.5" width="1.8" height="1.8"/><rect x="687.9" y="280.5" width="1.8" height="1.8"/><rect x="687.4" y="291.3" width="1.8" height="1.8"/><rect x="682.2" y="266.5" width="1.8" height="1.8"/><rect x="700.3" y="273.1" width="1.8" height="1.8"/><rect x="713.5" y="274.1" width="1.8" height="1.8"/><rect x="677.9" y="270.9" width="1.8" height="1.8"/><rect x="686.5" y="264.1" width="1.8" height="1.8"/><rect x="715.0" y="272.6" width="1.8" height="1.8"/><rect x="695.1" y="290.5" width="1.8" height="1.8"/><rect x="698.4" y="264.5" width="1.8" height="1.8"/><rect x="712.0" y="276.1" width="1.8" height="1.8"/><rect x="681.3" y="276.5" width="1.8" height="1.8"/><rect x="683.0" y="262.6" width="1.8" height="1.8"/><rect x="682.6" y="252.6" width="1.8" height="1.8"/><rect x="689.4" y="283.0" width="1.8" height="1.8"/><rect x="704.1" y="269.2" width="1.8" height="1.8"/><rect x="673.8" y="298.5" width="1.8" height="1.8"/><rect x="684.9" y="298.2" width="1.8" height="1.8"/><rect x="681.1" y="300.0" width="1.8" height="1.8"/><rect x="689.7" y="265.3" width="1.8" height="1.8"/><rect x="683.5" y="273.5" width="1.8" height="1.8"/><rect x="715.8" y="269.9" width="1.8" height="1.8"/><rect x="684.3" y="272.4" width="1.8" height="1.8"/><rect x="703.5" y="266.5" width="1.8" height="1.8"/><rect x="688.9" y="303.7" width="1.8" height="1.8"/><rect x="696.2" y="263.6" width="1.8" height="1.8"/><rect x="709.5" y="275.3" width="1.8" height="1.8"/><rect x="686.6" y="255.7" width="1.8" height="1.8"/><rect x="701.9" y="267.6" width="1.8" height="1.8"/><rect x="702.6" y="278.1" width="1.8" height="1.8"/><rect x="693.1" y="262.5" width="1.8" height="1.8"/><rect x="715.8" y="270.2" width="1.8" height="1.8"/><rect x="678.5" y="306.5" width="1.8" height="1.8"/><rect x="685.1" y="252.5" width="1.8" height="1.8"/><rect x="693.5" y="264.4" width="1.8" height="1.8"/><rect x="678.4" y="301.2" width="1.8" height="1.8"/><rect x="690.7" y="306.0" width="1.8" height="1.8"/><rect x="704.5" y="261.3" width="1.8" height="1.8"/><rect x="696.5" y="260.9" width="1.8" height="1.8"/><rect x="707.7" y="269.6" width="1.8" height="1.8"/><rect x="702.1" y="270.1" width="1.8" height="1.8"/><rect x="669.0" y="282.1" width="1.8" height="1.8"/><rect x="696.7" y="275.8" width="1.8" height="1.8"/><rect x="681.1" y="305.5" width="1.8" height="1.8"/><rect x="682.2" y="252.4" width="1.8" height="1.8"/><rect x="671.7" y="279.4" width="1.8" height="1.8"/><rect x="682.9" y="256.3" width="1.8" height="1.8"/><rect x="678.7" y="305.8" width="1.8" height="1.8"/><rect x="701.8" y="266.2" width="1.8" height="1.8"/><rect x="696.7" y="262.6" width="1.8" height="1.8"/><rect x="713.5" y="276.8" width="1.8" height="1.8"/><rect x="687.6" y="258.5" width="1.8" height="1.8"/><rect x="674.8" y="272.6" width="1.8" height="1.8"/><rect x="684.7" y="276.2" width="1.8" height="1.8"/><rect x="689.2" y="269.9" width="1.8" height="1.8"/><rect x="700.0" y="271.3" width="1.8" height="1.8"/><rect x="686.1" y="251.3" width="1.8" height="1.8"/><rect x="692.1" y="273.6" width="1.8" height="1.8"/><rect x="699.7" y="269.9" width="1.8" height="1.8"/><rect x="669.1" y="284.4" width="1.8" height="1.8"/><rect x="694.4" y="268.2" width="1.8" height="1.8"/><rect x="686.8" y="266.1" width="1.8" height="1.8"/><rect x="694.8" y="286.1" width="1.8" height="1.8"/><rect x="672.3" y="275.8" width="1.8" height="1.8"/><rect x="713.7" y="272.1" width="1.8" height="1.8"/><rect x="693.2" y="258.1" width="1.8" height="1.8"/><rect x="680.7" y="269.1" width="1.8" height="1.8"/><rect x="715.3" y="272.0" width="1.8" height="1.8"/><rect x="706.6" y="278.2" width="1.8" height="1.8"/><rect x="686.0" y="284.8" width="1.8" height="1.8"/><rect x="693.2" y="256.1" width="1.8" height="1.8"/><rect x="685.1" y="271.4" width="1.8" height="1.8"/><rect x="690.8" y="270.2" width="1.8" height="1.8"/><rect x="710.2" y="265.6" width="1.8" height="1.8"/><rect x="704.0" y="271.5" width="1.8" height="1.8"/><rect x="704.3" y="275.4" width="1.8" height="1.8"/><rect x="693.1" y="255.7" width="1.8" height="1.8"/><rect x="708.0" y="278.0" width="1.8" height="1.8"/><rect x="696.7" y="263.1" width="1.8" height="1.8"/><rect x="701.2" y="271.3" width="1.8" height="1.8"/><rect x="679.5" y="296.0" width="1.8" height="1.8"/><rect x="688.3" y="256.1" width="1.8" height="1.8"/><rect x="673.1" y="282.7" width="1.8" height="1.8"/><rect x="691.0" y="260.2" width="1.8" height="1.8"/><rect x="705.5" y="268.9" width="1.8" height="1.8"/><rect x="688.5" y="266.1" width="1.8" height="1.8"/><rect x="693.1" y="254.1" width="1.8" height="1.8"/><rect x="699.4" y="276.7" width="1.8" height="1.8"/><rect x="682.4" y="249.8" width="1.8" height="1.8"/><rect x="706.3" y="261.9" width="1.8" height="1.8"/><rect x="682.1" y="304.9" width="1.8" height="1.8"/><rect x="689.0" y="257.4" width="1.8" height="1.8"/><rect x="708.7" y="270.6" width="1.8" height="1.8"/><rect x="686.4" y="275.1" width="1.8" height="1.8"/><rect x="688.2" y="271.2" width="1.8" height="1.8"/><rect x="694.3" y="299.4" width="1.8" height="1.8"/><rect x="698.3" y="279.2" width="1.8" height="1.8"/><rect x="697.4" y="286.3" width="1.8" height="1.8"/><rect x="686.9" y="265.2" width="1.8" height="1.8"/><rect x="678.2" y="284.2" width="1.8" height="1.8"/><rect x="704.7" y="272.1" width="1.8" height="1.8"/><rect x="693.6" y="270.7" width="1.8" height="1.8"/><rect x="683.0" y="251.1" width="1.8" height="1.8"/><rect x="695.8" y="287.8" width="1.8" height="1.8"/><rect x="710.1" y="280.1" width="1.8" height="1.8"/><rect x="701.3" y="268.6" width="1.8" height="1.8"/><rect x="708.5" y="265.9" width="1.8" height="1.8"/><rect x="707.3" y="263.2" width="1.8" height="1.8"/><rect x="672.4" y="292.1" width="1.8" height="1.8"/><rect x="713.0" y="267.7" width="1.8" height="1.8"/><rect x="685.1" y="256.4" width="1.8" height="1.8"/><rect x="673.1" y="294.1" width="1.8" height="1.8"/><rect x="698.5" y="280.7" width="1.8" height="1.8"/><rect x="681.8" y="255.8" width="1.8" height="1.8"/><rect x="694.4" y="257.9" width="1.8" height="1.8"/><rect x="679.6" y="305.9" width="1.8" height="1.8"/><rect x="674.2" y="276.3" width="1.8" height="1.8"/><rect x="696.5" y="259.7" width="1.8" height="1.8"/><rect x="694.5" y="270.0" width="1.8" height="1.8"/><rect x="713.2" y="276.3" width="1.8" height="1.8"/><rect x="699.5" y="279.9" width="1.8" height="1.8"/><rect x="705.4" y="266.8" width="1.8" height="1.8"/><rect x="708.1" y="276.6" width="1.8" height="1.8"/><rect x="703.0" y="262.3" width="1.8" height="1.8"/><rect x="688.8" y="305.9" width="1.8" height="1.8"/><rect x="697.4" y="285.6" width="1.8" height="1.8"/><rect x="700.7" y="285.8" width="1.8" height="1.8"/><rect x="698.7" y="282.8" width="1.8" height="1.8"/><rect x="691.6" y="273.7" width="1.8" height="1.8"/><rect x="705.5" y="266.8" width="1.8" height="1.8"/><rect x="709.3" y="278.3" width="1.8" height="1.8"/><rect x="694.4" y="277.1" width="1.8" height="1.8"/><rect x="701.5" y="268.7" width="1.8" height="1.8"/><rect x="694.4" y="278.9" width="1.8" height="1.8"/><rect x="703.4" y="277.1" width="1.8" height="1.8"/><rect x="693.0" y="263.3" width="1.8" height="1.8"/><rect x="696.3" y="285.8" width="1.8" height="1.8"/><rect x="704.2" y="279.5" width="1.8" height="1.8"/><rect x="704.4" y="265.3" width="1.8" height="1.8"/><rect x="701.1" y="291.6" width="1.8" height="1.8"/><rect x="693.7" y="287.7" width="1.8" height="1.8"/><rect x="711.2" y="270.7" width="1.8" height="1.8"/><rect x="693.9" y="276.0" width="1.8" height="1.8"/><rect x="670.9" y="281.4" width="1.8" height="1.8"/><rect x="677.3" y="282.1" width="1.8" height="1.8"/><rect x="695.1" y="256.6" width="1.8" height="1.8"/><rect x="685.1" y="251.6" width="1.8" height="1.8"/><rect x="713.1" y="268.7" width="1.8" height="1.8"/><rect x="695.6" y="259.5" width="1.8" height="1.8"/><rect x="696.3" y="277.5" width="1.8" height="1.8"/><rect x="704.8" y="264.0" width="1.8" height="1.8"/><rect x="688.7" y="262.9" width="1.8" height="1.8"/><rect x="688.1" y="255.6" width="1.8" height="1.8"/><rect x="691.8" y="266.0" width="1.8" height="1.8"/><rect x="682.8" y="308.6" width="1.8" height="1.8"/><rect x="678.0" y="291.3" width="1.8" height="1.8"/><rect x="682.3" y="256.3" width="1.8" height="1.8"/><rect x="710.6" y="273.6" width="1.8" height="1.8"/><rect x="685.2" y="295.2" width="1.8" height="1.8"/><rect x="681.8" y="289.7" width="1.8" height="1.8"/><rect x="673.6" y="278.4" width="1.8" height="1.8"/><rect x="688.3" y="253.4" width="1.8" height="1.8"/><rect x="708.1" y="283.7" width="1.8" height="1.8"/><rect x="693.1" y="284.6" width="1.8" height="1.8"/><rect x="699.4" y="271.0" width="1.8" height="1.8"/><rect x="684.1" y="264.5" width="1.8" height="1.8"/><rect x="690.1" y="261.5" width="1.8" height="1.8"/><rect x="695.6" y="258.4" width="1.8" height="1.8"/><rect x="685.4" y="254.9" width="1.8" height="1.8"/><rect x="709.7" y="263.9" width="1.8" height="1.8"/><rect x="682.9" y="305.9" width="1.8" height="1.8"/><rect x="693.4" y="289.1" width="1.8" height="1.8"/><rect x="682.2" y="277.4" width="1.8" height="1.8"/><rect x="689.7" y="254.8" width="1.8" height="1.8"/><rect x="687.9" y="296.0" width="1.8" height="1.8"/><rect x="686.6" y="276.1" width="1.8" height="1.8"/><rect x="676.3" y="289.5" width="1.8" height="1.8"/><rect x="690.5" y="263.3" width="1.8" height="1.8"/><rect x="708.1" y="281.7" width="1.8" height="1.8"/><rect x="704.0" y="268.9" width="1.8" height="1.8"/><rect x="702.1" y="259.6" width="1.8" height="1.8"/><rect x="707.5" y="267.3" width="1.8" height="1.8"/><rect x="703.4" y="267.8" width="1.8" height="1.8"/><rect x="697.4" y="264.9" width="1.8" height="1.8"/><rect x="687.1" y="273.4" width="1.8" height="1.8"/><rect x="695.4" y="268.6" width="1.8" height="1.8"/><rect x="671.0" y="293.2" width="1.8" height="1.8"/><rect x="683.8" y="290.5" width="1.8" height="1.8"/><rect x="678.0" y="286.6" width="1.8" height="1.8"/><rect x="710.6" y="280.8" width="1.8" height="1.8"/><rect x="678.9" y="282.4" width="1.8" height="1.8"/><rect x="705.9" y="266.5" width="1.8" height="1.8"/><rect x="686.0" y="270.4" width="1.8" height="1.8"/><rect x="691.3" y="289.8" width="1.8" height="1.8"/><rect x="686.8" y="280.3" width="1.8" height="1.8"/><rect x="709.1" y="264.3" width="1.8" height="1.8"/><rect x="685.8" y="255.4" width="1.8" height="1.8"/><rect x="697.3" y="269.4" width="1.8" height="1.8"/><rect x="690.6" y="297.3" width="1.8" height="1.8"/><rect x="680.9" y="269.7" width="1.8" height="1.8"/><rect x="691.5" y="283.5" width="1.8" height="1.8"/><rect x="691.2" y="279.5" width="1.8" height="1.8"/><rect x="681.4" y="253.4" width="1.8" height="1.8"/><rect x="676.4" y="270.3" width="1.8" height="1.8"/><rect x="681.0" y="267.7" width="1.8" height="1.8"/><rect x="693.4" y="258.1" width="1.8" height="1.8"/><rect x="690.6" y="255.8" width="1.8" height="1.8"/><rect x="688.7" y="270.1" width="1.8" height="1.8"/><rect x="701.6" y="261.1" width="1.8" height="1.8"/><rect x="711.1" y="273.6" width="1.8" height="1.8"/><rect x="687.1" y="282.8" width="1.8" height="1.8"/><rect x="705.3" y="287.0" width="1.8" height="1.8"/><rect x="690.7" y="280.2" width="1.8" height="1.8"/><rect x="685.3" y="286.1" width="1.8" height="1.8"/><rect x="680.4" y="261.1" width="1.8" height="1.8"/><rect x="682.7" y="248.7" width="1.8" height="1.8"/><rect x="709.6" y="264.1" width="1.8" height="1.8"/><rect x="688.1" y="260.3" width="1.8" height="1.8"/><rect x="685.3" y="258.3" width="1.8" height="1.8"/><rect x="701.3" y="272.6" width="1.8" height="1.8"/><rect x="685.2" y="267.9" width="1.8" height="1.8"/><rect x="707.8" y="265.3" width="1.8" height="1.8"/><rect x="694.3" y="260.8" width="1.8" height="1.8"/><rect x="693.1" y="261.3" width="1.8" height="1.8"/><rect x="703.3" y="261.1" width="1.8" height="1.8"/><rect x="678.5" y="260.4" width="1.8" height="1.8"/><rect x="687.8" y="259.5" width="1.8" height="1.8"/><rect x="686.9" y="277.0" width="1.8" height="1.8"/><rect x="687.5" y="296.8" width="1.8" height="1.8"/><rect x="706.6" y="265.4" width="1.8" height="1.8"/><rect x="713.3" y="276.4" width="1.8" height="1.8"/><rect x="698.2" y="264.7" width="1.8" height="1.8"/><rect x="712.5" y="267.2" width="1.8" height="1.8"/><rect x="695.3" y="287.4" width="1.8" height="1.8"/><rect x="709.2" y="266.3" width="1.8" height="1.8"/><rect x="702.2" y="275.7" width="1.8" height="1.8"/><rect x="690.5" y="260.3" width="1.8" height="1.8"/><rect x="684.0" y="256.1" width="1.8" height="1.8"/><rect x="680.4" y="271.7" width="1.8" height="1.8"/><rect x="684.6" y="249.9" width="1.8" height="1.8"/><rect x="700.5" y="261.0" width="1.8" height="1.8"/><rect x="671.1" y="288.4" width="1.8" height="1.8"/><rect x="688.3" y="256.7" width="1.8" height="1.8"/><rect x="679.8" y="286.2" width="1.8" height="1.8"/><rect x="704.2" y="267.5" width="1.8" height="1.8"/><rect x="713.7" y="271.7" width="1.8" height="1.8"/><rect x="682.6" y="308.7" width="1.8" height="1.8"/><rect x="687.8" y="265.4" width="1.8" height="1.8"/><rect x="701.1" y="258.6" width="1.8" height="1.8"/><rect x="683.0" y="270.0" width="1.8" height="1.8"/><rect x="684.2" y="260.5" width="1.8" height="1.8"/><rect x="701.2" y="272.2" width="1.8" height="1.8"/><rect x="684.9" y="251.2" width="1.8" height="1.8"/><rect x="695.0" y="267.8" width="1.8" height="1.8"/><rect x="691.9" y="281.1" width="1.8" height="1.8"/><rect x="678.2" y="296.7" width="1.8" height="1.8"/><rect x="697.8" y="275.5" width="1.8" height="1.8"/><rect x="706.5" y="275.7" width="1.8" height="1.8"/><rect x="697.5" y="276.1" width="1.8" height="1.8"/><rect x="715.7" y="269.5" width="1.8" height="1.8"/><rect x="703.9" y="273.5" width="1.8" height="1.8"/><rect x="694.6" y="289.4" width="1.8" height="1.8"/><rect x="692.2" y="289.8" width="1.8" height="1.8"/><rect x="698.1" y="275.7" width="1.8" height="1.8"/><rect x="696.8" y="267.1" width="1.8" height="1.8"/><rect x="710.3" y="273.6" width="1.8" height="1.8"/><rect x="678.9" y="261.2" width="1.8" height="1.8"/><rect x="680.2" y="290.2" width="1.8" height="1.8"/><rect x="674.1" y="292.5" width="1.8" height="1.8"/><rect x="707.6" y="270.1" width="1.8" height="1.8"/><rect x="684.7" y="278.9" width="1.8" height="1.8"/><rect x="700.9" y="270.0" width="1.8" height="1.8"/><rect x="688.5" y="259.0" width="1.8" height="1.8"/><rect x="686.3" y="292.7" width="1.8" height="1.8"/><rect x="693.3" y="259.8" width="1.8" height="1.8"/><rect x="684.1" y="309.7" width="1.8" height="1.8"/><rect x="686.4" y="260.1" width="1.8" height="1.8"/><rect x="707.6" y="272.9" width="1.8" height="1.8"/><rect x="679.1" y="259.9" width="1.8" height="1.8"/><rect x="706.0" y="265.3" width="1.8" height="1.8"/><rect x="690.5" y="286.8" width="1.8" height="1.8"/><rect x="693.6" y="270.9" width="1.8" height="1.8"/><rect x="695.1" y="301.1" width="1.8" height="1.8"/><rect x="692.4" y="257.0" width="1.8" height="1.8"/><rect x="694.4" y="291.4" width="1.8" height="1.8"/><rect x="689.5" y="260.0" width="1.8" height="1.8"/><rect x="693.6" y="266.1" width="1.8" height="1.8"/><rect x="698.8" y="291.8" width="1.8" height="1.8"/><rect x="686.6" y="257.9" width="1.8" height="1.8"/><rect x="715.1" y="267.2" width="1.8" height="1.8"/><rect x="676.3" y="303.7" width="1.8" height="1.8"/><rect x="702.8" y="262.0" width="1.8" height="1.8"/><rect x="700.8" y="265.1" width="1.8" height="1.8"/><rect x="689.3" y="280.5" width="1.8" height="1.8"/><rect x="692.4" y="283.2" width="1.8" height="1.8"/><rect x="687.4" y="251.3" width="1.8" height="1.8"/><rect x="694.1" y="295.3" width="1.8" height="1.8"/><rect x="681.1" y="261.0" width="1.8" height="1.8"/><rect x="686.5" y="288.1" width="1.8" height="1.8"/><rect x="694.7" y="297.5" width="1.8" height="1.8"/><rect x="682.7" y="302.1" width="1.8" height="1.8"/><rect x="693.7" y="266.9" width="1.8" height="1.8"/><rect x="700.3" y="267.3" width="1.8" height="1.8"/><rect x="680.7" y="261.6" width="1.8" height="1.8"/><rect x="672.4" y="295.8" width="1.8" height="1.8"/><rect x="688.9" y="265.7" width="1.8" height="1.8"/><rect x="700.0" y="294.3" width="1.8" height="1.8"/><rect x="694.3" y="286.1" width="1.8" height="1.8"/><rect x="688.8" y="269.1" width="1.8" height="1.8"/><rect x="701.9" y="261.9" width="1.8" height="1.8"/><rect x="692.7" y="272.1" width="1.8" height="1.8"/><rect x="680.3" y="261.4" width="1.8" height="1.8"/><rect x="688.3" y="304.1" width="1.8" height="1.8"/><rect x="699.2" y="267.3" width="1.8" height="1.8"/><rect x="696.9" y="265.2" width="1.8" height="1.8"/><rect x="679.1" y="275.3" width="1.8" height="1.8"/><rect x="674.9" y="272.0" width="1.8" height="1.8"/><rect x="702.6" y="266.1" width="1.8" height="1.8"/><rect x="711.0" y="275.1" width="1.8" height="1.8"/><rect x="707.3" y="268.3" width="1.8" height="1.8"/><rect x="673.3" y="279.9" width="1.8" height="1.8"/><rect x="700.3" y="292.7" width="1.8" height="1.8"/><rect x="678.8" y="263.1" width="1.8" height="1.8"/><rect x="685.1" y="284.3" width="1.8" height="1.8"/><rect x="672.3" y="278.9" width="1.8" height="1.8"/><rect x="697.8" y="266.6" width="1.8" height="1.8"/><rect x="682.1" y="261.9" width="1.8" height="1.8"/><rect x="697.4" y="272.4" width="1.8" height="1.8"/><rect x="698.5" y="260.9" width="1.8" height="1.8"/><rect x="690.5" y="284.6" width="1.8" height="1.8"/><rect x="708.9" y="281.9" width="1.8" height="1.8"/><rect x="683.8" y="249.7" width="1.8" height="1.8"/><rect x="668.5" y="284.0" width="1.8" height="1.8"/><rect x="698.0" y="265.2" width="1.8" height="1.8"/><rect x="681.6" y="260.1" width="1.8" height="1.8"/><rect x="687.3" y="285.9" width="1.8" height="1.8"/><rect x="695.1" y="297.5" width="1.8" height="1.8"/><rect x="680.4" y="278.3" width="1.8" height="1.8"/><rect x="699.8" y="282.5" width="1.8" height="1.8"/><rect x="682.5" y="263.8" width="1.8" height="1.8"/><rect x="674.1" y="280.8" width="1.8" height="1.8"/><rect x="683.6" y="277.8" width="1.8" height="1.8"/><rect x="677.8" y="281.4" width="1.8" height="1.8"/><rect x="690.1" y="305.9" width="1.8" height="1.8"/><rect x="703.2" y="263.3" width="1.8" height="1.8"/><rect x="703.4" y="277.7" width="1.8" height="1.8"/><rect x="673.8" y="279.5" width="1.8" height="1.8"/><rect x="694.0" y="301.4" width="1.8" height="1.8"/><rect x="710.2" y="269.3" width="1.8" height="1.8"/><rect x="687.1" y="262.1" width="1.8" height="1.8"/><rect x="694.3" y="266.1" width="1.8" height="1.8"/><rect x="680.0" y="257.1" width="1.8" height="1.8"/><rect x="709.5" y="272.6" width="1.8" height="1.8"/><rect x="712.6" y="269.9" width="1.8" height="1.8"/><rect x="711.5" y="269.3" width="1.8" height="1.8"/><rect x="701.4" y="270.2" width="1.8" height="1.8"/><rect x="684.7" y="306.3" width="1.8" height="1.8"/><rect x="713.4" y="274.1" width="1.8" height="1.8"/><rect x="707.6" y="269.9" width="1.8" height="1.8"/><rect x="686.0" y="279.4" width="1.8" height="1.8"/><rect x="669.9" y="281.1" width="1.8" height="1.8"/><rect x="695.7" y="255.5" width="1.8" height="1.8"/><rect x="671.1" y="279.9" width="1.8" height="1.8"/><rect x="708.1" y="264.0" width="1.8" height="1.8"/><rect x="712.4" y="278.9" width="1.8" height="1.8"/><rect x="671.5" y="280.7" width="1.8" height="1.8"/><rect x="676.2" y="276.8" width="1.8" height="1.8"/><rect x="694.0" y="272.6" width="1.8" height="1.8"/><rect x="695.8" y="255.9" width="1.8" height="1.8"/><rect x="696.1" y="284.8" width="1.8" height="1.8"/><rect x="690.6" y="258.0" width="1.8" height="1.8"/><rect x="708.5" y="272.4" width="1.8" height="1.8"/><rect x="710.7" y="278.7" width="1.8" height="1.8"/><rect x="704.8" y="266.0" width="1.8" height="1.8"/><rect x="711.4" y="265.0" width="1.8" height="1.8"/><rect x="703.0" y="276.1" width="1.8" height="1.8"/><rect x="700.3" y="258.6" width="1.8" height="1.8"/><rect x="687.9" y="262.9" width="1.8" height="1.8"/><rect x="675.9" y="290.8" width="1.8" height="1.8"/><rect x="701.5" y="268.1" width="1.8" height="1.8"/><rect x="674.8" y="294.0" width="1.8" height="1.8"/><rect x="695.6" y="277.0" width="1.8" height="1.8"/><rect x="692.0" y="296.3" width="1.8" height="1.8"/><rect x="687.2" y="274.0" width="1.8" height="1.8"/><rect x="696.8" y="298.8" width="1.8" height="1.8"/><rect x="692.2" y="301.1" width="1.8" height="1.8"/><rect x="709.0" y="282.3" width="1.8" height="1.8"/><rect x="696.2" y="265.4" width="1.8" height="1.8"/><rect x="693.5" y="257.8" width="1.8" height="1.8"/><rect x="684.4" y="269.1" width="1.8" height="1.8"/><rect x="690.2" y="263.3" width="1.8" height="1.8"/><rect x="691.3" y="280.7" width="1.8" height="1.8"/><rect x="670.6" y="292.6" width="1.8" height="1.8"/><rect x="699.1" y="262.1" width="1.8" height="1.8"/><rect x="688.8" y="259.8" width="1.8" height="1.8"/><rect x="713.9" y="274.6" width="1.8" height="1.8"/><rect x="700.9" y="272.7" width="1.8" height="1.8"/><rect x="682.8" y="292.5" width="1.8" height="1.8"/><rect x="689.8" y="296.8" width="1.8" height="1.8"/><rect x="699.2" y="272.9" width="1.8" height="1.8"/><rect x="698.5" y="276.1" width="1.8" height="1.8"/><rect x="697.8" y="259.7" width="1.8" height="1.8"/><rect x="686.5" y="253.6" width="1.8" height="1.8"/><rect x="680.4" y="272.0" width="1.8" height="1.8"/><rect x="681.4" y="280.6" width="1.8" height="1.8"/><rect x="705.6" y="279.7" width="1.8" height="1.8"/><rect x="688.7" y="301.3" width="1.8" height="1.8"/><rect x="692.7" y="259.4" width="1.8" height="1.8"/><rect x="681.1" y="259.0" width="1.8" height="1.8"/><rect x="696.7" y="256.8" width="1.8" height="1.8"/><rect x="704.8" y="269.1" width="1.8" height="1.8"/><rect x="696.1" y="292.2" width="1.8" height="1.8"/><rect x="685.8" y="286.9" width="1.8" height="1.8"/><rect x="682.4" y="249.9" width="1.8" height="1.8"/><rect x="692.6" y="263.4" width="1.8" height="1.8"/><rect x="696.5" y="256.8" width="1.8" height="1.8"/><rect x="670.0" y="289.1" width="1.8" height="1.8"/><rect x="683.0" y="280.2" width="1.8" height="1.8"/><rect x="703.2" y="287.3" width="1.8" height="1.8"/><rect x="678.1" y="292.1" width="1.8" height="1.8"/><rect x="710.1" y="266.8" width="1.8" height="1.8"/><rect x="699.3" y="268.1" width="1.8" height="1.8"/><rect x="687.3" y="294.1" width="1.8" height="1.8"/><rect x="679.7" y="271.2" width="1.8" height="1.8"/><rect x="712.2" y="267.5" width="1.8" height="1.8"/><rect x="695.5" y="266.1" width="1.8" height="1.8"/><rect x="679.1" y="300.9" width="1.8" height="1.8"/><rect x="697.6" y="283.0" width="1.8" height="1.8"/><rect x="693.8" y="261.5" width="1.8" height="1.8"/><rect x="692.3" y="301.5" width="1.8" height="1.8"/><rect x="685.7" y="309.3" width="1.8" height="1.8"/><rect x="700.7" y="270.3" width="1.8" height="1.8"/><rect x="687.4" y="260.1" width="1.8" height="1.8"/><rect x="703.5" y="274.5" width="1.8" height="1.8"/><rect x="683.1" y="268.3" width="1.8" height="1.8"/><rect x="703.1" y="277.2" width="1.8" height="1.8"/><rect x="712.2" y="275.5" width="1.8" height="1.8"/><rect x="690.5" y="297.8" width="1.8" height="1.8"/><rect x="695.3" y="294.9" width="1.8" height="1.8"/><rect x="680.5" y="271.8" width="1.8" height="1.8"/><rect x="675.6" y="290.2" width="1.8" height="1.8"/><rect x="693.3" y="254.9" width="1.8" height="1.8"/><rect x="678.7" y="303.5" width="1.8" height="1.8"/><rect x="689.4" y="259.6" width="1.8" height="1.8"/><rect x="694.0" y="264.5" width="1.8" height="1.8"/><rect x="689.5" y="300.0" width="1.8" height="1.8"/><rect x="700.0" y="268.3" width="1.8" height="1.8"/><rect x="690.2" y="258.3" width="1.8" height="1.8"/><rect x="690.2" y="276.8" width="1.8" height="1.8"/><rect x="700.2" y="260.0" width="1.8" height="1.8"/><rect x="688.7" y="288.7" width="1.8" height="1.8"/><rect x="698.0" y="260.9" width="1.8" height="1.8"/><rect x="683.1" y="253.2" width="1.8" height="1.8"/><rect x="702.0" y="281.3" width="1.8" height="1.8"/><rect x="691.7" y="284.9" width="1.8" height="1.8"/><rect x="711.1" y="280.5" width="1.8" height="1.8"/><rect x="702.8" y="261.0" width="1.8" height="1.8"/><rect x="704.6" y="261.0" width="1.8" height="1.8"/><rect x="692.2" y="296.0" width="1.8" height="1.8"/><rect x="690.4" y="256.7" width="1.8" height="1.8"/><rect x="685.0" y="263.1" width="1.8" height="1.8"/><rect x="688.9" y="279.0" width="1.8" height="1.8"/><rect x="679.6" y="276.5" width="1.8" height="1.8"/><rect x="684.5" y="271.5" width="1.8" height="1.8"/><rect x="711.5" y="265.0" width="1.8" height="1.8"/><rect x="709.4" y="269.7" width="1.8" height="1.8"/><rect x="691.4" y="257.8" width="1.8" height="1.8"/><rect x="696.4" y="256.3" width="1.8" height="1.8"/><rect x="701.8" y="261.0" width="1.8" height="1.8"/><rect x="690.8" y="299.0" width="1.8" height="1.8"/><rect x="694.8" y="289.6" width="1.8" height="1.8"/><rect x="704.2" y="267.3" width="1.8" height="1.8"/><rect x="696.5" y="271.7" width="1.8" height="1.8"/><rect x="670.8" y="283.1" width="1.8" height="1.8"/><rect x="684.7" y="266.0" width="1.8" height="1.8"/><rect x="691.9" y="263.8" width="1.8" height="1.8"/><rect x="692.7" y="262.4" width="1.8" height="1.8"/><rect x="700.6" y="286.0" width="1.8" height="1.8"/><rect x="691.9" y="258.9" width="1.8" height="1.8"/><rect x="682.6" y="254.2" width="1.8" height="1.8"/><rect x="711.3" y="279.7" width="1.8" height="1.8"/><rect x="687.5" y="292.2" width="1.8" height="1.8"/><rect x="702.9" y="264.5" width="1.8" height="1.8"/><rect x="676.2" y="297.9" width="1.8" height="1.8"/><rect x="680.0" y="304.6" width="1.8" height="1.8"/><rect x="681.8" y="267.3" width="1.8" height="1.8"/></g>
<g fill="#f00"><rect x="711.8" y="266.4" width="1.7" height="1.7"/><rect x="724.2" y="283.3" width="1.7" height="1.7"/><rect x="699.3" y="283.7" width="1.7" height="1.7"/><rect x="723.8" y="294.3" width="1.7" height="1.7"/><rect x="726.6" y="295.3" width="1.7" height="1.7"/><rect x="700.3" y="275.0" width="1.7" height="1.7"/><rect x="719.3" y="277.3" width="1.7" height="1.7"/><rect x="742.7" y="303.0" width="1.7" height="1.7"/><rect x="739.6" y="295.7" width="1.7" height="1.7"/><rect x="702.1" y="278.3" width="1.7" height="1.7"/><rect x="740.6" y="301.8" width="1.7" height="1.7"/><rect x="720.6" y="288.3" width="1.7" height="1.7"/><rect x="701.8" y="296.9" width="1.7" height="1.7"/><rect x="708.8" y="289.9" width="1.7" height="1.7"/><rect x="709.3" y="265.2" width="1.7" height="1.7"/><rect x="741.5" y="286.4" width="1.7" height="1.7"/><rect x="741.9" y="302.8" width="1.7" height="1.7"/><rect x="704.4" y="312.6" width="1.7" height="1.7"/><rect x="728.4" y="279.7" width="1.7" height="1.7"/><rect x="713.8" y="283.4" width="1.7" height="1.7"/><rect x="705.1" y="280.4" width="1.7" height="1.7"/><rect x="729.0" y="299.9" width="1.7" height="1.7"/><rect x="741.1" y="285.7" width="1.7" height="1.7"/><rect x="711.0" y="291.9" width="1.7" height="1.7"/><rect x="742.1" y="294.5" width="1.7" height="1.7"/><rect x="719.1" y="281.6" width="1.7" height="1.7"/><rect x="709.6" y="266.6" width="1.7" height="1.7"/><rect x="729.4" y="277.7" width="1.7" height="1.7"/><rect x="706.7" y="284.0" width="1.7" height="1.7"/><rect x="717.0" y="272.2" width="1.7" height="1.7"/><rect x="732.2" y="309.9" width="1.7" height="1.7"/><rect x="719.7" y="276.5" width="1.7" height="1.7"/><rect x="745.0" y="290.1" width="1.7" height="1.7"/><rect x="739.9" y="308.7" width="1.7" height="1.7"/><rect x="735.4" y="305.4" width="1.7" height="1.7"/><rect x="717.7" y="275.1" width="1.7" height="1.7"/><rect x="720.4" y="278.1" width="1.7" height="1.7"/><rect x="726.0" y="294.7" width="1.7" height="1.7"/><rect x="745.0" y="315.1" width="1.7" height="1.7"/><rect x="727.2" y="291.1" width="1.7" height="1.7"/><rect x="732.5" y="293.9" width="1.7" height="1.7"/><rect x="700.9" y="274.5" width="1.7" height="1.7"/><rect x="716.2" y="297.8" width="1.7" height="1.7"/><rect x="721.2" y="280.6" width="1.7" height="1.7"/><rect x="713.1" y="267.3" width="1.7" height="1.7"/><rect x="720.7" y="295.1" width="1.7" height="1.7"/><rect x="736.7" y="284.9" width="1.7" height="1.7"/><rect x="735.2" y="307.1" width="1.7" height="1.7"/><rect x="723.4" y="273.5" width="1.7" height="1.7"/><rect x="720.3" y="278.8" width="1.7" height="1.7"/><rect x="736.7" y="283.6" width="1.7" height="1.7"/><rect x="706.5" y="266.1" width="1.7" height="1.7"/><rect x="699.7" y="272.9" width="1.7" height="1.7"/><rect x="702.9" y="263.8" width="1.7" height="1.7"/><rect x="722.4" y="298.8" width="1.7" height="1.7"/><rect x="705.1" y="264.5" width="1.7" height="1.7"/><rect x="706.9" y="288.8" width="1.7" height="1.7"/><rect x="703.4" y="260.7" width="1.7" height="1.7"/><rect x="704.9" y="278.6" width="1.7" height="1.7"/><rect x="720.3" y="306.4" width="1.7" height="1.7"/><rect x="719.7" y="278.5" width="1.7" height="1.7"/><rect x="745.9" y="293.4" width="1.7" height="1.7"/><rect x="709.1" y="294.0" width="1.7" height="1.7"/><rect x="724.7" y="285.1" width="1.7" height="1.7"/><rect x="714.4" y="269.3" width="1.7" height="1.7"/><rect x="734.7" y="291.8" width="1.7" height="1.7"/><rect x="731.2" y="284.9" width="1.7" height="1.7"/><rect x="742.5" y="291.7" width="1.7" height="1.7"/><rect x="714.9" y="274.7" width="1.7" height="1.7"/><rect x="719.8" y="279.2" width="1.7" height="1.7"/><rect x="714.5" y="289.8" width="1.7" height="1.7"/><rect x="728.0" y="277.8" width="1.7" height="1.7"/><rect x="718.8" y="272.2" width="1.7" height="1.7"/><rect x="727.9" y="277.5" width="1.7" height="1.7"/><rect x="711.9" y="266.4" width="1.7" height="1.7"/><rect x="714.0" y="273.6" width="1.7" height="1.7"/><rect x="724.1" y="287.9" width="1.7" height="1.7"/><rect x="724.5" y="281.9" width="1.7" height="1.7"/><rect x="717.2" y="283.5" width="1.7" height="1.7"/><rect x="719.9" y="283.3" width="1.7" height="1.7"/><rect x="699.6" y="274.9" width="1.7" height="1.7"/><rect x="704.2" y="261.4" width="1.7" height="1.7"/><rect x="715.9" y="268.7" width="1.7" height="1.7"/><rect x="714.9" y="311.6" width="1.7" height="1.7"/><rect x="702.2" y="261.5" width="1.7" height="1.7"/><rect x="709.1" y="272.1" width="1.7" height="1.7"/><rect x="707.0" y="274.0" width="1.7" height="1.7"/><rect x="720.6" y="279.7" width="1.7" height="1.7"/><rect x="731.0" y="288.0" width="1.7" height="1.7"/><rect x="742.8" y="305.4" width="1.7" height="1.7"/><rect x="701.8" y="270.7" width="1.7" height="1.7"/><rect x="724.7" y="292.0" width="1.7" height="1.7"/><rect x="708.8" y="276.3" width="1.7" height="1.7"/><rect x="716.1" y="281.7" width="1.7" height="1.7"/><rect x="744.6" y="286.8" width="1.7" height="1.7"/><rect x="709.6" y="265.4" width="1.7" height="1.7"/><rect x="702.6" y="260.7" width="1.7" height="1.7"/><rect x="701.6" y="307.3" width="1.7" height="1.7"/><rect x="738.7" y="297.0" width="1.7" height="1.7"/><rect x="719.6" y="274.8" width="1.7" height="1.7"/><rect x="703.5" y="294.7" width="1.7" height="1.7"/><rect x="717.7" y="275.7" width="1.7" height="1.7"/><rect x="744.3" y="294.8" width="1.7" height="1.7"/><rect x="717.4" y="273.5" width="1.7" height="1.7"/><rect x="733.5" y="294.1" width="1.7" height="1.7"/><rect x="727.1" y="297.6" width="1.7" height="1.7"/><rect x="728.6" y="283.3" width="1.7" height="1.7"/><rect x="732.1" y="282.2" width="1.7" height="1.7"/><rect x="727.1" y="294.5" width="1.7" height="1.7"/><rect x="733.2" y="291.0" width="1.7" height="1.7"/><rect x="743.3" y="299.0" width="1.7" height="1.7"/><rect x="735.6" y="289.5" width="1.7" height="1.7"/><rect x="734.0" y="287.5" width="1.7" height="1.7"/><rect x="733.0" y="294.7" width="1.7" height="1.7"/><rect x="724.1" y="275.2" width="1.7" height="1.7"/><rect x="741.8" y="303.5" width="1.7" height="1.7"/><rect x="722.7" y="290.8" width="1.7" height="1.7"/><rect x="728.9" y="324.2" width="1.7" height="1.7"/><rect x="730.9" y="303.2" width="1.7" height="1.7"/><rect x="700.4" y="260.6" width="1.7" height="1.7"/><rect x="711.7" y="266.3" width="1.7" height="1.7"/><rect x="714.9" y="292.0" width="1.7" height="1.7"/><rect x="728.7" y="287.3" width="1.7" height="1.7"/><rect x="707.8" y="266.2" width="1.7" height="1.7"/><rect x="740.1" y="302.8" width="1.7" height="1.7"/><rect x="701.7" y="265.5" width="1.7" height="1.7"/></g>
<g fill="#000"><rect x="593" y="366.8" width="5" height="1.5"/><rect x="594.7" y="365.1" width="1.5" height="5"/></g><g stroke="#f04040" stroke-width="0.7"><path d="M635.9 261.6 l3 3 M638.9 261.6 l-3 3 M745.4 286 l3 3 M748.4 286 l-3 3 M752.8 288.2 l3 3 M755.8 288.2 l-3 3"/></g>
<g font-family="Liberation Mono" font-size="8.8" font-weight="normal" letter-spacing="0.75" fill="#000" stroke="#000" stroke-width="0.35"><text x="277.5" y="99.6">40e10<tspan font-size="6" dy="-2.3" font-weight="normal">/</tspan><tspan dy="2.3" dx="1.6">N</tspan></text><text x="277.5" y="242.6">40e0<tspan font-size="6" dy="-2.3" font-weight="normal">/</tspan><tspan dy="2.3" dx="1.6">N</tspan></text><text x="277.5" y="385.6">39e50<tspan font-size="6" dy="-2.3" font-weight="normal">/</tspan><tspan dy="2.3" dx="1.6">N</tspan></text><text x="277.5" y="528.6">39e40<tspan font-size="6" dy="-2.3" font-weight="normal">/</tspan><tspan dy="2.3" dx="1.6">N</tspan></text><text x="277.5" y="671.6">39e30<tspan font-size="6" dy="-2.3" font-weight="normal">/</tspan><tspan dy="2.3" dx="1.6">N</tspan></text><text x="328" y="799.5">52e40<tspan font-size="6" dy="-2.3" font-weight="normal">/</tspan><tspan dy="2.3" dx="1.6">E</tspan></text><text x="550.5" y="799.5">53e0<tspan font-size="6" dy="-2.3" font-weight="normal">/</tspan><tspan dy="2.3" dx="1.6">E</tspan></text><text x="767.8" y="799.5">53e20<tspan font-size="6" dy="-2.3" font-weight="normal">/</tspan><tspan dy="2.3" dx="1.6">E</tspan></text><text x="987.5" y="799.5">53e40<tspan font-size="6" dy="-2.3" font-weight="normal">/</tspan><tspan dy="2.3" dx="1.6">E</tspan></text></g>
<rect x="276" y="75" width="849" height="1" fill="#000"/>
<rect x="275" y="801" width="850" height="1" fill="#000"/>
</svg>
<div id="title" class="abs">
  <svg class="abs" style="left:0;top:0" width="24" height="22" viewBox="0 0 24 22">
    <path d="M7.5 4.5 L9 3.3 L11 3.5 L12 5.2 L11.5 6 L11.5 10.5 L7 10.5 L7.2 5.5Z" fill="#000"/>
    <rect x="7.9" y="5" width="1.4" height="1.9" fill="#f00"/>
    <rect x="8" y="8.5" width="1" height="1" fill="#aaa"/>
    <path d="M3.4 10 L6.6 10 L7 10.4 L10.2 10.4 L10.2 13.4 L6.5 13.4 L6.2 12.2 L3.4 12.2Z" fill="#0000e0"/>
    <path d="M3.4 10.2 L4.6 10.2 L4.6 11.8 L3.4 11.8Z" fill="#000"/>
    <path d="M5.7 13.6 L7.9 13.6 L7.9 15.6 L5.7 15.6Z M8.6 13.6 L11.2 13.6 L11.2 15.4 L8.6 15.4Z" fill="#00d000"/>
    <path d="M7.9 13.6 L8.6 13.6 L8.6 15.4 L7.9 15.4Z" fill="#000"/>
    <path d="M3.4 15.8 L6.8 15.4 L6.8 17.7 L3.6 17.7Z M10.6 14.6 L12.2 14.6 L12.2 16.2 L10.6 16.2Z" fill="#000"/>
  </svg>
  <div class="abs t">General NOAA Oil Modeling Environment</div>
  <div class="abs tb" style="left:1064px"><div class="abs" style="left:4px;top:10px;width:7px;height:3px;background:#fff"></div></div>
  <div class="abs tb" style="left:1085px"><div class="abs" style="left:4px;top:6px;width:7px;height:6px;border:1.5px solid #fff;border-top-width:2px"></div><div class="abs" style="left:7px;top:3px;width:7px;height:6px;border:1.5px solid #fff;border-top-width:2px;border-left:none;border-bottom:none"></div></div>
  <div class="abs tb" style="left:1105px;width:18px;background:linear-gradient(135deg,#d48a94,#c2606c 60%,#b65662);border-color:#dcc6d4"><svg class="abs" style="left:3px;top:2px" width="11" height="11"><path d="M1.5 1.5 L9.5 9.5 M9.5 1.5 L1.5 9.5" stroke="#fff" stroke-width="2"/></svg></div>
</div>
<div id="menu" class="abs">
  <span style="left:5px">File</span><span style="left:30px">Edit</span><span style="left:56px">Item</span><span style="left:86px">Model</span><span style="left:121px">Help</span>
</div>
<div id="hdr" class="abs"></div>
<div class="abs" style="left:272px;top:75px;width:853px;height:1px;background:#222"></div>
<!-- summary header -->
<svg class="abs" style="left:4px;top:40px" width="28" height="36" viewBox="0 0 28 36">
  <path d="M7 7.5 L9 5.3 L11.5 4 L14 5.8 L15.2 9.5 L15.2 12.3 L9.8 12.3 L9.6 8.2 Z" fill="#ff0000" stroke="#000" stroke-width="0.9"/>
  <path d="M9 12.6 L14.6 12.6 L15.5 16 L14 19.8 L11 19.5 L8.8 15Z" fill="#fff" stroke="#222" stroke-width="0.5"/>
  <path d="M8.3 16.2 L11 19.3 L14 19.8 L15.5 18.5 L19.6 18.4 L19.8 22.3 L12.8 22.5 L12.6 24 L8.4 24 Z" fill="#0000ff" stroke="#000" stroke-width="0.6"/>
  <circle cx="20.8" cy="18.6" r="1.4" fill="#fff" stroke="#000" stroke-width="0.9"/>
  <path d="M7.6 24 L12.6 23.8 L12.8 22.4 L15.8 22.4 L18 28.8 L15.6 29.6 L12.6 26.4 L8.2 27.8Z" fill="#00ff00" stroke="#000" stroke-width="0.5"/>
  <path d="M4.6 25 L7.8 24 L8.4 27.8 L6 29.6 L4.6 29.4Z M16.8 28.8 L18.4 28.4 L21.8 29.4 L21.4 31.6 L17.4 31.6Z" fill="#000"/>
</svg>
<div class="abs list b" style="left:71px;top:41px;font-size:10px;letter-spacing:-0.2px">Summary List</div>
<div class="abs list" style="left:39.5px;top:51.4px">- Double click item to access its settings</div>
<div class="abs list" style="left:39.5px;top:61.9px">- Toggle carat to display list</div>
<!-- splitter -->
<div class="abs" style="left:272px;top:40px;width:5px;height:35px;background:repeating-linear-gradient(to bottom,#fff 0,#fff 1px,#c0c0c0 1px,#c0c0c0 2px);border-left:1px solid #000;border-right:1px solid #000;border-top:1px solid #555"></div>
<!-- toolbar buttons -->
<div class="btn" style="left:279.7px"><svg class="abs" style="left:0;top:0" width="26" height="25" viewBox="0 0 26 25"><path d="M8.5 4 L8.5 19 L12 15.5 L15 22 L17.5 21 L14.5 14.5 L19.5 14.5Z" fill="#c0c0c0" stroke="#000" stroke-width="1"/></svg></div>
<div class="btn" style="left:312.1px"><svg class="abs" style="left:0;top:0" width="26" height="25" viewBox="0 0 26 25"><circle cx="11.5" cy="11" r="6.8" fill="none" stroke="#000" stroke-width="1.6"/><path d="M8.5 11 H14.5 M11.5 8 V14" stroke="#000" stroke-width="1.4"/><path d="M16.5 16 L21.5 21.5" stroke="#000" stroke-width="3"/></svg></div>
<div class="btn" style="left:344.0px"><svg class="abs" style="left:0;top:0" width="26" height="25" viewBox="0 0 26 25"><circle cx="11.5" cy="11" r="6.8" fill="none" stroke="#000" stroke-width="1.6"/><path d="M8.5 11 H14.5" stroke="#000" stroke-width="1.4"/><path d="M16.5 16 L21.5 21.5" stroke="#000" stroke-width="3"/><path d="M5 21 h3 M5 22.5 h3" stroke="#000" stroke-width="0.8"/></svg></div>
<div class="btn" style="left:375.8px"><svg class="abs" style="left:0;top:0" width="26" height="25" viewBox="0 0 26 25"><path d="M7 13 L5 10 L6.5 9 L9 11.5 L9 5 L11 4.5 L11.5 10 L12 3.5 L14 3.5 L14.3 10 L15 4.5 L17 5 L17 11 L18 7 L20 7.5 L19.5 15 L17 21 L10 21 Z" fill="#c0c0c0" stroke="#000" stroke-width="1"/></svg></div>
<div class="btn" style="left:407.6px"><svg class="abs" style="left:0;top:0" width="26" height="25" viewBox="0 0 26 25"><rect x="0.5" y="0" width="24" height="24" fill="#00ffff"/><path d="M3 10.5 L20.5 10 L18.5 14 L6 14.5 Z" fill="#d8d8d8" stroke="#000" stroke-width="1.1"/><path d="M11 8 h7 l1 2 h-8z" fill="#000"/><path d="M13 7 h3 v1 h-3z" fill="#000"/><path d="M5 12 h12" stroke="#000" stroke-width="0.6" stroke-dasharray="1 1"/><path d="M7 15 l1.5 2.5 M5 19 q2 -2 4 -0.5 q2 1.5 3.5 -0.5 q1.5 -1.5 3 0.5 q2 1.5 4 0.5" stroke="#000" stroke-width="1.5" fill="none"/><path d="M8 17 h3 v2 h-3z" fill="#000"/></svg></div>
<div class="btn" style="left:439.3px"><svg class="abs" style="left:0;top:0" width="26" height="25" viewBox="0 0 26 25"><path d="M14 11.5 Q14 9.5 16 9.5 h2 Q20 9.5 20 11.5 V20.5 H14Z" fill="none" stroke="#000" stroke-width="1"/><path d="M14 14 h6" stroke="#000" stroke-width="0.8"/><path d="M15.5 9.5 v-2 h3 v2 M17 7.5 v-1.5 l2 -0.8" fill="none" stroke="#000" stroke-width="0.9"/><g fill="#707070"><rect x="6" y="3" width="1" height="1"/><rect x="8" y="3.5" width="1" height="1"/><rect x="10" y="4.5" width="1" height="1"/><rect x="6" y="5.5" width="1" height="1"/><rect x="8" y="6" width="1" height="1"/><rect x="10" y="6.5" width="1" height="1"/><rect x="12" y="6" width="1" height="1"/><rect x="6" y="8" width="1" height="1"/><rect x="8" y="8.5" width="1" height="1"/><rect x="10" y="8.5" width="1" height="1"/><rect x="7" y="10" width="1" height="1"/><rect x="9" y="10.5" width="1" height="1"/></g><path d="M2.5 18.5 h3 l-1.5 1.8z M2.5 20.8 h3 l-1.5 1.8z" fill="#000"/></svg></div>
<div class="btn" style="left:471.0px"><svg class="abs" style="left:0;top:0" width="26" height="25" viewBox="0 0 26 25"><path d="M4 15 L12 8 L22 8 L22 11 L14 18 L4 18 Z M4 15 L14 15 L22 8 M14 15 L14 18" fill="none" stroke="#000" stroke-width="1.1"/></svg></div>
<div class="btn" style="left:502.7px"><svg class="abs" style="left:0;top:0" width="26" height="25" viewBox="0 0 26 25"><path d="M1.5 21.5 L21.5 3 L24 5.5 L4 24 Z" fill="#fff" stroke="#000" stroke-width="0.5"/><g fill="#000"><path d="M1.5 21.5 L4 19.2 L6.5 21.7 L4 24Z"/><path d="M6.5 16.9 L9 14.6 L11.5 17.1 L9 19.4Z"/><path d="M11.5 12.3 L14 10 L16.5 12.5 L14 14.8Z"/><path d="M16.5 7.7 L19 5.4 L21.5 7.9 L19 10.2Z"/></g><g font-family="Liberation Sans" font-size="6" fill="#000"><text x="1.5" y="14" transform="rotate(-40 3 12)">1</text><text x="7.5" y="9.5" transform="rotate(-40 9 8)">2</text><text x="12.5" y="5.5" transform="rotate(-40 14 4)">3</text><text x="19" y="3" transform="rotate(-40 20 2)">1</text></g></svg></div>
<div class="abs" style="left:542.5px;top:44px;width:152.5px;height:27px;border:1px solid #000;background:#c0c0c0;box-shadow:inset 1px 1px 0 #fff"></div>
<div class="abs" style="left:547px;top:47.5px;width:19px;height:19px;background:#c0c0c0;border-top:1px solid #fff;border-left:1px solid #fff;border-right:1.5px solid #000;border-bottom:1.5px solid #000"><svg class="abs" style="left:-1px;top:-1px" width="19" height="19"><rect x="5" y="5" width="2" height="10" fill="#000"/><path d="M14 5 L8 10 L14 15Z" fill="#000"/></svg></div>
<div class="abs" style="left:649px;top:47.5px;width:19px;height:19px;background:#c0c0c0;border-top:1px solid #fff;border-left:1px solid #fff;border-right:1.5px solid #000;border-bottom:1.5px solid #000"><svg class="abs" style="left:-1px;top:-1px" width="19" height="19"><path d="M7 4.5 L13 10 L7 15.5Z" fill="#000"/></svg></div>
<div class="abs" style="left:671.5px;top:47.5px;width:19px;height:19px;background:#c0c0c0;border-top:1px solid #fff;border-left:1px solid #fff;border-right:1.5px solid #000;border-bottom:1.5px solid #000"><svg class="abs" style="left:-1px;top:-1px" width="19" height="19"><rect x="5" y="5" width="2" height="10" fill="#000"/><path d="M9 4.5 L15 10 L9 15.5Z" fill="#000"/></svg></div>
<div class="abs" style="left:568px;top:46px;font-size:10.4px;letter-spacing:-0.18px;white-space:nowrap">12/29/2006 17:30</div>
<div class="abs" style="left:569px;top:58px;width:76px;height:6.5px;background:#808080;border:1px solid #000"></div>
<svg class="abs" style="left:637px;top:64px" width="10" height="6"><path d="M5 0.5 L9.5 5.5 L0.5 5.5Z" fill="#fff" stroke="#000" stroke-width="1"/></svg>
<!-- left list -->
<div class="abs" style="left:0;top:76px;width:262px;height:725px;background:#fff"></div>
<div class="abs list" style="left:0;top:76px;width:262px;height:725px">
<div class="li b" style="left:17px;top:0.25px;font-size:10.4px">Model Settings</div>
<div class="li" style="left:4.5px;top:5.40px;width:0;height:0;border-left:4px solid transparent;border-right:4px solid transparent;border-top:4.5px solid #000"></div>
<div class="li" style="left:17px;top:14.57px">Start time: December 28, 2006 18:00</div>
<div class="li" style="left:17px;top:28.59px">Duration: 24 hours</div>
<div class="li" style="left:28px;top:42.61px">Include the Minimum Regret</div>
<div class="li" style="left:17px;top:46.36px;width:5px;height:5px;background:#000"></div>
<div class="li" style="left:28px;top:56.63px">solution (RED SPLOTS on screen)</div>
<div class="li" style="left:28px;top:70.65px">Show Currents</div>
<div class="li" style="left:17px;top:73.90px;width:6px;height:6px;border:1px solid #000"></div>
<div class="li b" style="left:17px;top:84.37px;font-size:10.4px">Location File</div>
<div class="li" style="left:4.5px;top:89.52px;width:0;height:0;border-left:4px solid transparent;border-right:4px solid transparent;border-top:4.5px solid #000"></div>
<div class="li" style="left:17px;top:98.69px">Caspian Sea</div>
<div class="li b" style="left:17px;top:112.41px;font-size:10.4px">Wind</div>
<div class="li" style="left:4.5px;top:117.56px;width:0;height:0;border-left:4px solid transparent;border-right:4px solid transparent;border-top:4.5px solid #000"></div>
<div class="li" style="left:17px;top:126.73px">Constant Wind: 20 knots from SW</div>
<div class="li b" style="left:17px;top:140.45px;font-size:10.4px">Spills</div>
<div class="li" style="left:4.5px;top:145.60px;width:0;height:0;border-left:4px solid transparent;border-right:4px solid transparent;border-top:4.5px solid #000"></div>
<div class="li" style="left:26.3px;top:154.42px;width:138.6px;height:14px;background:#316ac5"></div>
<div class="li" style="left:28px;top:154.77px;color:#fff;letter-spacing:-0.38px">Medium Crude : 1000 metric tons</div>
<div class="li" style="left:15.5px;top:159.62px;width:0;height:0;border-left:3.8px solid transparent;border-right:3.8px solid transparent;border-top:4.6px solid #000"></div>
<div class="li" style="left:38px;top:168.79px">Show Initial Positions</div>
<div class="li" style="left:27px;top:172.54px;width:5px;height:5px;background:#000"></div>
<div class="li" style="left:38px;top:182.81px">Release Time/Position</div>
<svg class="li" style="left:26.5px;top:183.86px" width="6" height="9"><path d="M0.5 0.5 L5.5 4.5 L0.5 8.5Z" fill="none" stroke="#000" stroke-width="1"/></svg>
<div class="li" style="left:38px;top:196.83px">Splot Mass Balance (Best Guess)</div>
<div class="li" style="left:26px;top:201.68px;width:0;height:0;border-left:3.8px solid transparent;border-right:3.8px solid transparent;border-top:4.6px solid #000"></div>
<div class="li" style="left:38px;top:210.85px">Released: 1000 metric tons (100.0%)</div>
<div class="li" style="left:38px;top:224.87px">Floating: 596 metric tons (59.6%)</div>
<div class="li" style="left:38px;top:238.89px">Beached: 196 metric tons (19.6% )</div>
<div class="li" style="left:38px;top:252.91px">Evaporated and Dispersed: 208 metric tons (20.8%)</div>
<div class="li" style="left:38px;top:266.93px">Off map: 0 metric tons (0.0%)</div>
</div>
<!-- scrollbar -->
<div class="abs" style="left:262px;top:76px;width:14px;height:725px;background:#f3f1ea"></div>
<div class="abs" style="left:262px;top:76px;width:14px;height:14px;background:#eeebdc;border-right:1px solid #a8a48c;border-bottom:1px solid #a8a48c;border-top:1px solid #fff;border-left:1px solid #fff"><div class="abs" style="left:3px;top:4px;width:0;height:0;border-left:3.5px solid transparent;border-right:3.5px solid transparent;border-bottom:4px solid #a8a48c"></div></div>
<div class="abs" style="left:262px;top:788px;width:14px;height:13px;background:#eeebdc;border-right:1px solid #a8a48c;border-bottom:1px solid #a8a48c;border-top:1px solid #fff;border-left:1px solid #fff"><div class="abs" style="left:3px;top:4px;width:0;height:0;border-left:3.5px solid transparent;border-right:3.5px solid transparent;border-top:4px solid #a8a48c"></div></div>
<div class="abs" style="left:0;top:801px;width:276px;height:1px;background:#7a7a7a"></div>
<!-- taskbar -->
<div id="task" class="abs"></div>
<div class="abs" style="left:0;top:818px;width:84px;height:27px;border-radius:0 12px 12px 0;background:linear-gradient(to bottom,#5aac58 0,#3c963c 3px,#3a913a 20px,#2f7d30 27px)"></div>
<svg class="abs" style="left:9px;top:823px" width="17" height="16" viewBox="0 0 17 16"><path d="M1 2 Q4 0 8 2 L7 7 Q4 5 1 7Z" fill="#f04010"/><path d="M9 2 Q12 0 16 2 L15 7 Q12 5 8 7Z" fill="#30b020"/><path d="M1 8 Q4 6 7 8 L6 13 Q3 11 0 13Z" fill="#1a70e0"/><path d="M8 8 Q11 6 15 8 L14 13 Q11 11 7 13Z" fill="#f0c010"/></svg>
<div class="abs" style="left:30px;top:822px;color:#fff;font-size:15px;font-weight:bold;font-style:italic;letter-spacing:-0.3px">пуск</div>
<svg class="abs" style="left:95px;top:824px" width="15" height="15" viewBox="0 0 15 15"><text x="1.5" y="12.5" font-family="Liberation Sans" font-weight="bold" font-style="italic" font-size="15" fill="#46b4f4">e</text><ellipse cx="7.5" cy="8" rx="7" ry="3" transform="rotate(-35 7.5 8)" fill="none" stroke="#3aa0e8" stroke-width="1.3"/></svg>
<div class="abs" style="left:115px;top:825px;width:13.5px;height:13.5px;border-radius:50%;background:conic-gradient(#40b030 0 25%,#f0c020 0 50%,#2a70e0 0 75%,#f05020 0)"><div class="abs" style="left:3px;top:3px;width:7.5px;height:7.5px;border-radius:50%;background:#fff"></div><div class="abs" style="left:4px;top:4px;width:5.5px;height:5.5px;border-radius:50%;background:#111"></div><div class="abs" style="left:5.8px;top:5px;width:0;height:0;border-top:1.8px solid transparent;border-bottom:1.8px solid transparent;border-left:2.8px solid #fff"></div></div>
<svg class="abs" style="left:135px;top:824px" width="15" height="15" viewBox="0 0 15 15"><path d="M1.5 2.5 h9 l2 2 v9 h-11z" fill="#f4f0d8" stroke="#2050b0" stroke-width="0.8"/><path d="M9.5 5.5 Q7 3.5 5 5.5 Q3.5 8 5 10.5 Q7 12.5 9.5 10.5" fill="none" stroke="#2a70e0" stroke-width="2"/><circle cx="12.5" cy="7" r="1" fill="#f04020"/></svg>
<div class="abs" style="left:160px;top:820px;color:#b8d0ff;font-size:12px;letter-spacing:-1px">&#8250;&#8250;</div>
<div class="tbtn" style="left:174px;width:139px"></div>
<svg class="abs" style="left:182px;top:825px" width="15" height="14"><path d="M0.5 3 h5 l1.5 -2 h5 v11 h-11.5z" fill="#f0c850" stroke="#b08020" stroke-width="0.8"/><rect x="4" y="5" width="9" height="7" fill="#a0d0f0" stroke="#6090c0" stroke-width="0.6"/><path d="M1 12 L3 6 h11.5 l-2 6z" fill="#f8d870" stroke="#b08020" stroke-width="0.6"/></svg>
<div class="abs" style="left:198.8px;top:826.88px;color:#fff;font-size:9.3px;letter-spacing:-0.47px;white-space:nowrap">PREZENTACIY</div>
<div class="tbtn" style="left:314px;width:139px"></div>
<svg class="abs" style="left:322px;top:825px" width="15" height="14"><path d="M0.5 3 h5 l1.5 -2 h5 v11 h-11.5z" fill="#f0c850" stroke="#b08020" stroke-width="0.8"/><rect x="4" y="5" width="9" height="7" fill="#a0d0f0" stroke="#6090c0" stroke-width="0.6"/><path d="M1 12 L3 6 h11.5 l-2 6z" fill="#f8d870" stroke="#b08020" stroke-width="0.6"/></svg>
<div class="abs" style="left:339.3px;top:826.88px;color:#fff;font-size:9.3px;letter-spacing:-0.3px;white-space:nowrap">FOTO</div>
<div class="tbtn" style="left:455px;width:139px"></div>
<svg class="abs" style="left:463px;top:824px" width="14" height="15"><rect x="0.5" y="3" width="3" height="11" fill="#e02020" stroke="#000" stroke-width="0.6"/><rect x="3.5" y="2" width="3" height="12" fill="#20a020" stroke="#000" stroke-width="0.6"/><rect x="6.5" y="2" width="3" height="12" fill="#2040e0" stroke="#000" stroke-width="0.6"/><rect x="9.5" y="1" width="3" height="13" fill="#e0e0e0" stroke="#000" stroke-width="0.6"/></svg>
<div class="abs" style="left:480px;top:826.61px;color:#fff;font-size:9.6px;letter-spacing:0.05px;white-space:nowrap">МультиЛекс</div>
<div class="tbtn" style="left:595.5px;width:139px"></div>
<svg class="abs" style="left:604.5px;top:824px" width="12" height="15" viewBox="0 0 14 16"><path d="M6 0 L9 2 L8 4 L6 4Z" fill="#111"/><rect x="5" y="3" width="3" height="3" fill="#c00"/><rect x="4" y="6" width="4" height="3" fill="#1530d0"/><rect x="5" y="9" width="5" height="3" fill="#10a020"/><path d="M2 13 L5 11 L6 12 L4 15Z M9 11 L12 13 L11 15 L8 13Z" fill="#111"/></svg>
<div class="abs" style="left:620.7px;top:826.79px;color:#fff;font-size:9.4px;letter-spacing:-0.05px;white-space:nowrap">General NOAA Oil Mo...</div>
<div class="abs" style="left:1059px;top:818px;width:66px;height:27px;background:linear-gradient(to bottom,#18a8f8 0,#0e96ee 3px,#0b8fe8 22px,#0a7fd8 27px);border-left:1px solid #0850b0"></div>
<div class="abs" style="left:1026px;top:823px;width:16px;height:16px;background:#2a62d8"></div><div class="abs" style="left:1028.3px;top:827px;color:#fff;font-size:9.4px;letter-spacing:-0.2px">EN</div>
<div class="abs" style="left:1052px;top:824px;width:15px;height:15px;border-radius:50%;background:radial-gradient(circle at 40% 35%,#60b8ff,#1a70e0);border:1px solid #c0d8ff"><svg class="abs" style="left:3px;top:3px" width="8" height="8"><path d="M5.5 1 L2.5 4 L5.5 7" stroke="#fff" stroke-width="2" fill="none"/></svg></div>
<svg class="abs" style="left:1069px;top:823px" width="13" height="15"><rect x="5" y="1" width="7" height="6" fill="#303050" stroke="#a0a0c0" stroke-width="0.8"/><rect x="1" y="6" width="7" height="6" fill="#303050" stroke="#a0a0c0" stroke-width="0.8"/><path d="M2 13 h5 M6 8 h5" stroke="#c0c0e0"/></svg>
<div class="abs" style="left:1089.4px;top:827px;color:#fff;font-size:9.6px;letter-spacing:-0.1px">18:14</div>
</body></html>
